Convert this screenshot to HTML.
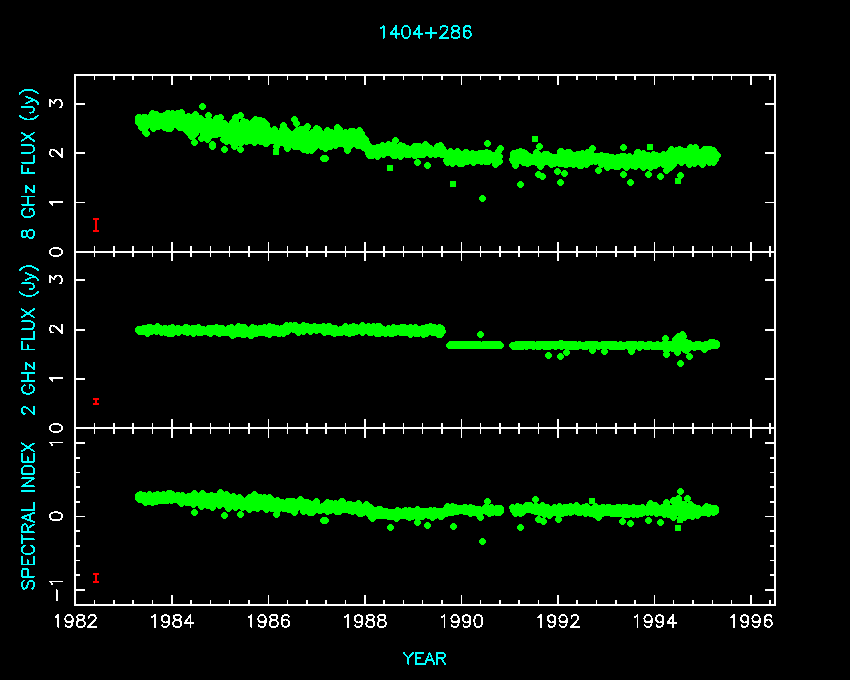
<!DOCTYPE html>
<html><head><meta charset="utf-8"><title>1404+286</title>
<style>
html,body{margin:0;padding:0;background:#000;font-family:"Liberation Sans",sans-serif;}
svg{display:block}
</style></head><body>
<svg width="850" height="680" viewBox="0 0 850 680">
<rect width="850" height="680" fill="#000"/>
<g fill="#0f0" shape-rendering="crispEdges">
<defs><path id="d" d="M-1-3h3v1h1v1h1v3h-1v1h-1v1h-3v-1h-1v-1h-1v-3h1v-1h1z"/></defs>
<use href="#d" x="269" y="133"/><use href="#d" x="321" y="136"/><use href="#d" x="600" y="162"/><use href="#d" x="529" y="156"/><use href="#d" x="364" y="144"/><use href="#d" x="330" y="138"/><use href="#d" x="484" y="157"/><use href="#d" x="246" y="136"/><use href="#d" x="527" y="163"/><use href="#d" x="683" y="160"/><use href="#d" x="281" y="133"/><use href="#d" x="687" y="151"/><use href="#d" x="524" y="156"/><use href="#d" x="193" y="125"/><use href="#d" x="394" y="151"/><use href="#d" x="651" y="159"/><use href="#d" x="542" y="159"/><use href="#d" x="327" y="130"/><use href="#d" x="563" y="157"/><use href="#d" x="265" y="136"/><use href="#d" x="185" y="128"/><use href="#d" x="230" y="137"/><use href="#d" x="335" y="137"/><use href="#d" x="407" y="148"/><use href="#d" x="292" y="137"/><use href="#d" x="610" y="161"/><use href="#d" x="250" y="129"/><use href="#d" x="213" y="131"/><use href="#d" x="191" y="128"/><use href="#d" x="633" y="165"/><use href="#d" x="486" y="154"/><use href="#d" x="678" y="150"/><use href="#d" x="558" y="159"/><use href="#d" x="636" y="155"/><use href="#d" x="676" y="155"/><use href="#d" x="454" y="156"/><use href="#d" x="681" y="152"/><use href="#d" x="424" y="152"/><use href="#d" x="296" y="140"/><use href="#d" x="399" y="151"/><use href="#d" x="523" y="158"/><use href="#d" x="329" y="141"/><use href="#d" x="661" y="158"/><use href="#d" x="286" y="141"/><use href="#d" x="334" y="137"/><use href="#d" x="288" y="138"/><use href="#d" x="343" y="136"/><use href="#d" x="140" y="124"/><use href="#d" x="301" y="139"/><use href="#d" x="177" y="113"/><use href="#d" x="495" y="159"/><use href="#d" x="240" y="115"/><use href="#d" x="314" y="140"/><use href="#d" x="393" y="151"/><use href="#d" x="225" y="140"/><use href="#d" x="264" y="134"/><use href="#d" x="412" y="149"/><use href="#d" x="414" y="155"/><use href="#d" x="285" y="143"/><use href="#d" x="310" y="145"/><use href="#d" x="299" y="136"/><use href="#d" x="289" y="141"/><use href="#d" x="417" y="146"/><use href="#d" x="260" y="134"/><use href="#d" x="425" y="145"/><use href="#d" x="280" y="132"/><use href="#d" x="623" y="156"/><use href="#d" x="242" y="137"/><use href="#d" x="637" y="162"/><use href="#d" x="241" y="126"/><use href="#d" x="572" y="163"/><use href="#d" x="492" y="157"/><use href="#d" x="259" y="120"/><use href="#d" x="578" y="158"/><use href="#d" x="282" y="129"/><use href="#d" x="187" y="122"/><use href="#d" x="496" y="159"/><use href="#d" x="449" y="154"/><use href="#d" x="239" y="135"/><use href="#d" x="281" y="142"/><use href="#d" x="534" y="156"/><use href="#d" x="184" y="123"/><use href="#d" x="645" y="159"/><use href="#d" x="386" y="148"/><use href="#d" x="496" y="162"/><use href="#d" x="319" y="136"/><use href="#d" x="241" y="127"/><use href="#d" x="143" y="121"/><use href="#d" x="259" y="135"/><use href="#d" x="642" y="162"/><use href="#d" x="701" y="152"/><use href="#d" x="394" y="153"/><use href="#d" x="357" y="145"/><use href="#d" x="297" y="146"/><use href="#d" x="697" y="157"/><use href="#d" x="171" y="117"/><use href="#d" x="374" y="148"/><use href="#d" x="235" y="133"/><use href="#d" x="277" y="136"/><use href="#d" x="590" y="157"/><use href="#d" x="256" y="127"/><use href="#d" x="457" y="151"/><use href="#d" x="350" y="137"/><use href="#d" x="431" y="150"/><use href="#d" x="331" y="135"/><use href="#d" x="301" y="131"/><use href="#d" x="301" y="136"/><use href="#d" x="187" y="121"/><use href="#d" x="417" y="148"/><use href="#d" x="649" y="161"/><use href="#d" x="686" y="155"/><use href="#d" x="153" y="120"/><use href="#d" x="669" y="160"/><use href="#d" x="208" y="127"/><use href="#d" x="571" y="159"/><use href="#d" x="657" y="161"/><use href="#d" x="235" y="136"/><use href="#d" x="330" y="141"/><use href="#d" x="357" y="136"/><use href="#d" x="338" y="140"/><use href="#d" x="437" y="153"/><use href="#d" x="143" y="117"/><use href="#d" x="382" y="149"/><use href="#d" x="646" y="159"/><use href="#d" x="188" y="123"/><use href="#d" x="418" y="154"/><use href="#d" x="416" y="153"/><use href="#d" x="591" y="157"/><use href="#d" x="696" y="156"/><use href="#d" x="547" y="154"/><use href="#d" x="296" y="132"/><use href="#d" x="526" y="160"/><use href="#d" x="339" y="129"/><use href="#d" x="583" y="160"/><use href="#d" x="704" y="155"/><use href="#d" x="640" y="159"/><use href="#d" x="164" y="127"/><use href="#d" x="306" y="140"/><use href="#d" x="637" y="161"/><use href="#d" x="486" y="159"/><use href="#d" x="337" y="127"/><use href="#d" x="170" y="128"/><use href="#d" x="580" y="154"/><use href="#d" x="138" y="118"/><use href="#d" x="191" y="129"/><use href="#d" x="713" y="150"/><use href="#d" x="587" y="152"/><use href="#d" x="641" y="163"/><use href="#d" x="414" y="150"/><use href="#d" x="235" y="137"/><use href="#d" x="447" y="157"/><use href="#d" x="384" y="149"/><use href="#d" x="232" y="142"/><use href="#d" x="234" y="130"/><use href="#d" x="287" y="148"/><use href="#d" x="684" y="152"/><use href="#d" x="709" y="151"/><use href="#d" x="545" y="157"/><use href="#d" x="557" y="159"/><use href="#d" x="562" y="154"/><use href="#d" x="437" y="149"/><use href="#d" x="240" y="139"/><use href="#d" x="646" y="160"/><use href="#d" x="648" y="163"/><use href="#d" x="549" y="160"/><use href="#d" x="678" y="153"/><use href="#d" x="705" y="153"/><use href="#d" x="429" y="151"/><use href="#d" x="577" y="160"/><use href="#d" x="495" y="157"/><use href="#d" x="204" y="124"/><use href="#d" x="321" y="146"/><use href="#d" x="177" y="124"/><use href="#d" x="651" y="160"/><use href="#d" x="150" y="119"/><use href="#d" x="449" y="155"/><use href="#d" x="240" y="143"/><use href="#d" x="223" y="128"/><use href="#d" x="234" y="146"/><use href="#d" x="646" y="158"/><use href="#d" x="424" y="147"/><use href="#d" x="335" y="145"/><use href="#d" x="717" y="155"/><use href="#d" x="454" y="160"/><use href="#d" x="313" y="141"/><use href="#d" x="352" y="137"/><use href="#d" x="541" y="162"/><use href="#d" x="207" y="127"/><use href="#d" x="577" y="161"/><use href="#d" x="650" y="159"/><use href="#d" x="413" y="147"/><use href="#d" x="391" y="150"/><use href="#d" x="220" y="128"/><use href="#d" x="580" y="161"/><use href="#d" x="377" y="147"/><use href="#d" x="497" y="160"/><use href="#d" x="163" y="122"/><use href="#d" x="265" y="143"/><use href="#d" x="256" y="136"/><use href="#d" x="706" y="157"/><use href="#d" x="163" y="117"/><use href="#d" x="262" y="132"/><use href="#d" x="156" y="114"/><use href="#d" x="516" y="158"/><use href="#d" x="338" y="136"/><use href="#d" x="159" y="118"/><use href="#d" x="390" y="149"/><use href="#d" x="237" y="134"/><use href="#d" x="385" y="150"/><use href="#d" x="354" y="133"/><use href="#d" x="266" y="140"/><use href="#d" x="625" y="160"/><use href="#d" x="539" y="160"/><use href="#d" x="410" y="151"/><use href="#d" x="369" y="147"/><use href="#d" x="201" y="128"/><use href="#d" x="487" y="156"/><use href="#d" x="430" y="148"/><use href="#d" x="662" y="160"/><use href="#d" x="699" y="159"/><use href="#d" x="607" y="162"/><use href="#d" x="640" y="160"/><use href="#d" x="425" y="149"/><use href="#d" x="354" y="136"/><use href="#d" x="415" y="150"/><use href="#d" x="445" y="152"/><use href="#d" x="611" y="163"/><use href="#d" x="225" y="132"/><use href="#d" x="486" y="153"/><use href="#d" x="663" y="164"/><use href="#d" x="266" y="143"/><use href="#d" x="304" y="132"/><use href="#d" x="626" y="159"/><use href="#d" x="515" y="155"/><use href="#d" x="697" y="159"/><use href="#d" x="688" y="150"/><use href="#d" x="617" y="162"/><use href="#d" x="528" y="159"/><use href="#d" x="248" y="137"/><use href="#d" x="261" y="122"/><use href="#d" x="638" y="157"/><use href="#d" x="331" y="136"/><use href="#d" x="535" y="161"/><use href="#d" x="404" y="152"/><use href="#d" x="144" y="123"/><use href="#d" x="614" y="158"/><use href="#d" x="318" y="138"/><use href="#d" x="333" y="135"/><use href="#d" x="179" y="118"/><use href="#d" x="499" y="156"/><use href="#d" x="589" y="160"/><use href="#d" x="434" y="151"/><use href="#d" x="414" y="146"/><use href="#d" x="585" y="160"/><use href="#d" x="194" y="123"/><use href="#d" x="451" y="153"/><use href="#d" x="571" y="163"/><use href="#d" x="350" y="138"/><use href="#d" x="645" y="160"/><use href="#d" x="402" y="150"/><use href="#d" x="205" y="127"/><use href="#d" x="704" y="149"/><use href="#d" x="402" y="152"/><use href="#d" x="574" y="157"/><use href="#d" x="183" y="120"/><use href="#d" x="606" y="160"/><use href="#d" x="226" y="126"/><use href="#d" x="210" y="121"/><use href="#d" x="298" y="136"/><use href="#d" x="384" y="152"/><use href="#d" x="419" y="149"/><use href="#d" x="158" y="120"/><use href="#d" x="483" y="155"/><use href="#d" x="567" y="162"/><use href="#d" x="705" y="157"/><use href="#d" x="459" y="163"/><use href="#d" x="678" y="156"/><use href="#d" x="689" y="164"/><use href="#d" x="261" y="129"/><use href="#d" x="176" y="121"/><use href="#d" x="236" y="125"/><use href="#d" x="569" y="157"/><use href="#d" x="289" y="136"/><use href="#d" x="203" y="130"/><use href="#d" x="684" y="160"/><use href="#d" x="534" y="158"/><use href="#d" x="693" y="151"/><use href="#d" x="328" y="138"/><use href="#d" x="249" y="129"/><use href="#d" x="217" y="128"/><use href="#d" x="684" y="158"/><use href="#d" x="233" y="139"/><use href="#d" x="602" y="158"/><use href="#d" x="260" y="128"/><use href="#d" x="638" y="152"/><use href="#d" x="170" y="117"/><use href="#d" x="359" y="141"/><use href="#d" x="370" y="148"/><use href="#d" x="703" y="159"/><use href="#d" x="658" y="161"/><use href="#d" x="360" y="140"/><use href="#d" x="384" y="151"/><use href="#d" x="552" y="158"/><use href="#d" x="656" y="162"/><use href="#d" x="536" y="162"/><use href="#d" x="436" y="151"/><use href="#d" x="659" y="159"/><use href="#d" x="329" y="144"/><use href="#d" x="350" y="145"/><use href="#d" x="341" y="135"/><use href="#d" x="421" y="152"/><use href="#d" x="400" y="156"/><use href="#d" x="321" y="138"/><use href="#d" x="278" y="134"/><use href="#d" x="361" y="133"/><use href="#d" x="706" y="158"/><use href="#d" x="377" y="149"/><use href="#d" x="542" y="163"/><use href="#d" x="314" y="147"/><use href="#d" x="616" y="165"/><use href="#d" x="297" y="130"/><use href="#d" x="307" y="126"/><use href="#d" x="212" y="146"/><use href="#d" x="572" y="158"/><use href="#d" x="388" y="148"/><use href="#d" x="210" y="130"/><use href="#d" x="448" y="158"/><use href="#d" x="420" y="150"/><use href="#d" x="430" y="151"/><use href="#d" x="550" y="159"/><use href="#d" x="176" y="114"/><use href="#d" x="423" y="154"/><use href="#d" x="167" y="128"/><use href="#d" x="703" y="156"/><use href="#d" x="520" y="157"/><use href="#d" x="236" y="143"/><use href="#d" x="670" y="167"/><use href="#d" x="239" y="131"/><use href="#d" x="343" y="141"/><use href="#d" x="165" y="119"/><use href="#d" x="353" y="140"/><use href="#d" x="561" y="151"/><use href="#d" x="208" y="115"/><use href="#d" x="588" y="159"/><use href="#d" x="385" y="149"/><use href="#d" x="602" y="161"/><use href="#d" x="238" y="132"/><use href="#d" x="660" y="161"/><use href="#d" x="559" y="159"/><use href="#d" x="165" y="120"/><use href="#d" x="415" y="152"/><use href="#d" x="175" y="117"/><use href="#d" x="556" y="162"/><use href="#d" x="348" y="135"/><use href="#d" x="586" y="157"/><use href="#d" x="649" y="162"/><use href="#d" x="240" y="129"/><use href="#d" x="607" y="163"/><use href="#d" x="361" y="144"/><use href="#d" x="517" y="156"/><use href="#d" x="702" y="164"/><use href="#d" x="533" y="160"/><use href="#d" x="266" y="129"/><use href="#d" x="138" y="122"/><use href="#d" x="202" y="128"/><use href="#d" x="308" y="142"/><use href="#d" x="176" y="118"/><use href="#d" x="686" y="159"/><use href="#d" x="225" y="125"/><use href="#d" x="331" y="133"/><use href="#d" x="697" y="155"/><use href="#d" x="447" y="162"/><use href="#d" x="539" y="161"/><use href="#d" x="304" y="144"/><use href="#d" x="523" y="156"/><use href="#d" x="232" y="136"/><use href="#d" x="338" y="128"/><use href="#d" x="663" y="159"/><use href="#d" x="560" y="159"/><use href="#d" x="405" y="150"/><use href="#d" x="403" y="146"/><use href="#d" x="568" y="154"/><use href="#d" x="368" y="150"/><use href="#d" x="388" y="152"/><use href="#d" x="466" y="156"/><use href="#d" x="462" y="161"/><use href="#d" x="404" y="148"/><use href="#d" x="488" y="159"/><use href="#d" x="224" y="134"/><use href="#d" x="566" y="161"/><use href="#d" x="232" y="123"/><use href="#d" x="606" y="163"/><use href="#d" x="469" y="157"/><use href="#d" x="680" y="152"/><use href="#d" x="379" y="149"/><use href="#d" x="519" y="157"/><use href="#d" x="180" y="122"/><use href="#d" x="313" y="135"/><use href="#d" x="232" y="127"/><use href="#d" x="525" y="157"/><use href="#d" x="208" y="129"/><use href="#d" x="426" y="152"/><use href="#d" x="284" y="143"/><use href="#d" x="235" y="120"/><use href="#d" x="609" y="160"/><use href="#d" x="279" y="138"/><use href="#d" x="184" y="121"/><use href="#d" x="365" y="139"/><use href="#d" x="260" y="136"/><use href="#d" x="551" y="164"/><use href="#d" x="496" y="158"/><use href="#d" x="687" y="153"/><use href="#d" x="631" y="162"/><use href="#d" x="315" y="139"/><use href="#d" x="636" y="160"/><use href="#d" x="284" y="139"/><use href="#d" x="632" y="158"/><use href="#d" x="222" y="132"/><use href="#d" x="676" y="153"/><use href="#d" x="465" y="152"/><use href="#d" x="403" y="153"/><use href="#d" x="371" y="151"/><use href="#d" x="356" y="137"/><use href="#d" x="229" y="140"/><use href="#d" x="344" y="138"/><use href="#d" x="209" y="134"/><use href="#d" x="409" y="150"/><use href="#d" x="477" y="154"/><use href="#d" x="517" y="158"/><use href="#d" x="385" y="152"/><use href="#d" x="561" y="153"/><use href="#d" x="549" y="158"/><use href="#d" x="359" y="138"/><use href="#d" x="386" y="150"/><use href="#d" x="343" y="139"/><use href="#d" x="220" y="117"/><use href="#d" x="610" y="160"/><use href="#d" x="478" y="155"/><use href="#d" x="353" y="131"/><use href="#d" x="684" y="156"/><use href="#d" x="693" y="155"/><use href="#d" x="699" y="152"/><use href="#d" x="196" y="118"/><use href="#d" x="422" y="151"/><use href="#d" x="671" y="149"/><use href="#d" x="311" y="134"/><use href="#d" x="404" y="151"/><use href="#d" x="299" y="146"/><use href="#d" x="469" y="160"/><use href="#d" x="448" y="156"/><use href="#d" x="627" y="164"/><use href="#d" x="276" y="146"/><use href="#d" x="576" y="163"/><use href="#d" x="635" y="161"/><use href="#d" x="149" y="121"/><use href="#d" x="369" y="148"/><use href="#d" x="285" y="138"/><use href="#d" x="420" y="148"/><use href="#d" x="715" y="155"/><use href="#d" x="473" y="162"/><use href="#d" x="177" y="123"/><use href="#d" x="571" y="158"/><use href="#d" x="254" y="142"/><use href="#d" x="406" y="154"/><use href="#d" x="666" y="156"/><use href="#d" x="335" y="133"/><use href="#d" x="523" y="162"/><use href="#d" x="174" y="121"/><use href="#d" x="384" y="148"/><use href="#d" x="479" y="154"/><use href="#d" x="302" y="143"/><use href="#d" x="568" y="156"/><use href="#d" x="323" y="141"/><use href="#d" x="294" y="146"/><use href="#d" x="541" y="161"/><use href="#d" x="548" y="158"/><use href="#d" x="214" y="134"/><use href="#d" x="193" y="124"/><use href="#d" x="619" y="162"/><use href="#d" x="298" y="131"/><use href="#d" x="663" y="154"/><use href="#d" x="469" y="156"/><use href="#d" x="486" y="152"/><use href="#d" x="140" y="119"/><use href="#d" x="466" y="157"/><use href="#d" x="642" y="160"/><use href="#d" x="713" y="162"/><use href="#d" x="358" y="133"/><use href="#d" x="235" y="129"/><use href="#d" x="378" y="148"/><use href="#d" x="400" y="155"/><use href="#d" x="409" y="149"/><use href="#d" x="455" y="156"/><use href="#d" x="173" y="119"/><use href="#d" x="146" y="133"/><use href="#d" x="582" y="158"/><use href="#d" x="366" y="142"/><use href="#d" x="517" y="161"/><use href="#d" x="551" y="157"/><use href="#d" x="306" y="128"/><use href="#d" x="365" y="147"/><use href="#d" x="218" y="122"/><use href="#d" x="480" y="153"/><use href="#d" x="565" y="158"/><use href="#d" x="490" y="154"/><use href="#d" x="286" y="130"/><use href="#d" x="376" y="148"/><use href="#d" x="396" y="154"/><use href="#d" x="145" y="127"/><use href="#d" x="589" y="154"/><use href="#d" x="658" y="159"/><use href="#d" x="306" y="139"/><use href="#d" x="347" y="137"/><use href="#d" x="422" y="150"/><use href="#d" x="368" y="153"/><use href="#d" x="352" y="135"/><use href="#d" x="570" y="156"/><use href="#d" x="516" y="157"/><use href="#d" x="323" y="135"/><use href="#d" x="534" y="157"/><use href="#d" x="393" y="148"/><use href="#d" x="289" y="133"/><use href="#d" x="638" y="163"/><use href="#d" x="141" y="119"/><use href="#d" x="554" y="162"/><use href="#d" x="606" y="158"/><use href="#d" x="260" y="126"/><use href="#d" x="468" y="158"/><use href="#d" x="707" y="154"/><use href="#d" x="312" y="143"/><use href="#d" x="494" y="159"/><use href="#d" x="377" y="156"/><use href="#d" x="393" y="144"/><use href="#d" x="574" y="156"/><use href="#d" x="453" y="156"/><use href="#d" x="567" y="158"/><use href="#d" x="462" y="163"/><use href="#d" x="316" y="128"/><use href="#d" x="484" y="158"/><use href="#d" x="568" y="157"/><use href="#d" x="175" y="120"/><use href="#d" x="233" y="138"/><use href="#d" x="342" y="137"/><use href="#d" x="282" y="141"/><use href="#d" x="466" y="160"/><use href="#d" x="166" y="125"/><use href="#d" x="669" y="153"/><use href="#d" x="564" y="155"/><use href="#d" x="381" y="147"/><use href="#d" x="174" y="119"/><use href="#d" x="566" y="164"/><use href="#d" x="466" y="155"/><use href="#d" x="378" y="149"/><use href="#d" x="319" y="138"/><use href="#d" x="169" y="126"/><use href="#d" x="577" y="158"/><use href="#d" x="293" y="141"/><use href="#d" x="272" y="138"/><use href="#d" x="466" y="152"/><use href="#d" x="306" y="132"/><use href="#d" x="201" y="130"/><use href="#d" x="643" y="154"/><use href="#d" x="238" y="129"/><use href="#d" x="263" y="124"/><use href="#d" x="567" y="159"/><use href="#d" x="404" y="150"/><use href="#d" x="679" y="149"/><use href="#d" x="656" y="158"/><use href="#d" x="463" y="154"/><use href="#d" x="232" y="128"/><use href="#d" x="316" y="145"/><use href="#d" x="522" y="157"/><use href="#d" x="310" y="140"/><use href="#d" x="435" y="154"/><use href="#d" x="463" y="160"/><use href="#d" x="683" y="156"/><use href="#d" x="498" y="159"/><use href="#d" x="304" y="136"/><use href="#d" x="205" y="121"/><use href="#d" x="484" y="154"/><use href="#d" x="457" y="154"/><use href="#d" x="575" y="161"/><use href="#d" x="139" y="120"/><use href="#d" x="494" y="161"/><use href="#d" x="470" y="155"/><use href="#d" x="656" y="155"/><use href="#d" x="583" y="156"/><use href="#d" x="491" y="159"/><use href="#d" x="714" y="156"/><use href="#d" x="333" y="133"/><use href="#d" x="277" y="142"/><use href="#d" x="293" y="136"/><use href="#d" x="207" y="128"/><use href="#d" x="374" y="153"/><use href="#d" x="337" y="138"/><use href="#d" x="207" y="125"/><use href="#d" x="618" y="157"/><use href="#d" x="621" y="164"/><use href="#d" x="283" y="125"/><use href="#d" x="189" y="120"/><use href="#d" x="256" y="120"/><use href="#d" x="476" y="155"/><use href="#d" x="636" y="158"/><use href="#d" x="318" y="137"/><use href="#d" x="439" y="150"/><use href="#d" x="185" y="129"/><use href="#d" x="349" y="145"/><use href="#d" x="661" y="160"/><use href="#d" x="222" y="127"/><use href="#d" x="574" y="158"/><use href="#d" x="398" y="151"/><use href="#d" x="465" y="156"/><use href="#d" x="660" y="156"/><use href="#d" x="390" y="146"/><use href="#d" x="302" y="138"/><use href="#d" x="267" y="128"/><use href="#d" x="495" y="164"/><use href="#d" x="480" y="158"/><use href="#d" x="439" y="152"/><use href="#d" x="315" y="143"/><use href="#d" x="389" y="147"/><use href="#d" x="454" y="153"/><use href="#d" x="153" y="119"/><use href="#d" x="175" y="122"/><use href="#d" x="160" y="122"/><use href="#d" x="624" y="165"/><use href="#d" x="497" y="162"/><use href="#d" x="319" y="144"/><use href="#d" x="470" y="160"/><use href="#d" x="195" y="131"/><use href="#d" x="251" y="129"/><use href="#d" x="329" y="136"/><use href="#d" x="345" y="132"/><use href="#d" x="629" y="163"/><use href="#d" x="454" y="161"/><use href="#d" x="182" y="118"/><use href="#d" x="290" y="141"/><use href="#d" x="431" y="151"/><use href="#d" x="577" y="157"/><use href="#d" x="715" y="157"/><use href="#d" x="324" y="141"/><use href="#d" x="497" y="161"/><use href="#d" x="397" y="151"/><use href="#d" x="231" y="129"/><use href="#d" x="271" y="140"/><use href="#d" x="371" y="150"/><use href="#d" x="210" y="135"/><use href="#d" x="413" y="149"/><use href="#d" x="700" y="157"/><use href="#d" x="646" y="157"/><use href="#d" x="680" y="160"/><use href="#d" x="184" y="120"/><use href="#d" x="517" y="157"/><use href="#d" x="478" y="159"/><use href="#d" x="288" y="134"/><use href="#d" x="562" y="163"/><use href="#d" x="447" y="154"/><use href="#d" x="698" y="155"/><use href="#d" x="212" y="144"/><use href="#d" x="442" y="148"/><use href="#d" x="632" y="165"/><use href="#d" x="234" y="134"/><use href="#d" x="679" y="152"/><use href="#d" x="565" y="159"/><use href="#d" x="516" y="154"/><use href="#d" x="263" y="138"/><use href="#d" x="675" y="155"/><use href="#d" x="185" y="118"/><use href="#d" x="349" y="137"/><use href="#d" x="170" y="120"/><use href="#d" x="408" y="153"/><use href="#d" x="428" y="149"/><use href="#d" x="273" y="131"/><use href="#d" x="565" y="155"/><use href="#d" x="284" y="142"/><use href="#d" x="328" y="140"/><use href="#d" x="257" y="126"/><use href="#d" x="400" y="147"/><use href="#d" x="172" y="120"/><use href="#d" x="186" y="125"/><use href="#d" x="288" y="137"/><use href="#d" x="712" y="156"/><use href="#d" x="178" y="123"/><use href="#d" x="309" y="144"/><use href="#d" x="358" y="136"/><use href="#d" x="619" y="163"/><use href="#d" x="203" y="123"/><use href="#d" x="675" y="152"/><use href="#d" x="556" y="159"/><use href="#d" x="658" y="163"/><use href="#d" x="612" y="165"/><use href="#d" x="478" y="156"/><use href="#d" x="168" y="113"/><use href="#d" x="476" y="156"/><use href="#d" x="236" y="135"/><use href="#d" x="690" y="160"/><use href="#d" x="232" y="129"/><use href="#d" x="251" y="126"/><use href="#d" x="488" y="156"/><use href="#d" x="565" y="156"/><use href="#d" x="214" y="124"/><use href="#d" x="366" y="145"/><use href="#d" x="398" y="148"/><use href="#d" x="403" y="150"/><use href="#d" x="399" y="149"/><use href="#d" x="148" y="124"/><use href="#d" x="679" y="154"/><use href="#d" x="472" y="157"/><use href="#d" x="547" y="161"/><use href="#d" x="692" y="151"/><use href="#d" x="458" y="156"/><use href="#d" x="342" y="136"/><use href="#d" x="574" y="162"/><use href="#d" x="243" y="140"/><use href="#d" x="482" y="157"/><use href="#d" x="566" y="157"/><use href="#d" x="467" y="161"/><use href="#d" x="625" y="158"/><use href="#d" x="221" y="133"/><use href="#d" x="610" y="162"/><use href="#d" x="684" y="155"/><use href="#d" x="630" y="159"/><use href="#d" x="358" y="138"/><use href="#d" x="226" y="141"/><use href="#d" x="483" y="158"/><use href="#d" x="288" y="135"/><use href="#d" x="544" y="160"/><use href="#d" x="320" y="143"/><use href="#d" x="554" y="163"/><use href="#d" x="413" y="151"/><use href="#d" x="665" y="163"/><use href="#d" x="168" y="121"/><use href="#d" x="695" y="154"/><use href="#d" x="233" y="132"/><use href="#d" x="307" y="143"/><use href="#d" x="581" y="156"/><use href="#d" x="138" y="117"/><use href="#d" x="423" y="147"/><use href="#d" x="525" y="153"/><use href="#d" x="332" y="136"/><use href="#d" x="313" y="138"/><use href="#d" x="691" y="156"/><use href="#d" x="656" y="160"/><use href="#d" x="340" y="139"/><use href="#d" x="195" y="125"/><use href="#d" x="176" y="116"/><use href="#d" x="296" y="123"/><use href="#d" x="563" y="161"/><use href="#d" x="287" y="142"/><use href="#d" x="287" y="141"/><use href="#d" x="443" y="153"/><use href="#d" x="694" y="156"/><use href="#d" x="468" y="154"/><use href="#d" x="331" y="141"/><use href="#d" x="224" y="123"/><use href="#d" x="227" y="129"/><use href="#d" x="653" y="164"/><use href="#d" x="223" y="126"/><use href="#d" x="169" y="124"/><use href="#d" x="536" y="158"/><use href="#d" x="252" y="122"/><use href="#d" x="624" y="160"/><use href="#d" x="152" y="113"/><use href="#d" x="338" y="143"/><use href="#d" x="213" y="132"/><use href="#d" x="294" y="140"/><use href="#d" x="340" y="138"/><use href="#d" x="700" y="158"/><use href="#d" x="538" y="154"/><use href="#d" x="281" y="137"/><use href="#d" x="365" y="148"/><use href="#d" x="494" y="155"/><use href="#d" x="479" y="157"/><use href="#d" x="369" y="155"/><use href="#d" x="243" y="121"/><use href="#d" x="620" y="157"/><use href="#d" x="461" y="157"/><use href="#d" x="482" y="160"/><use href="#d" x="560" y="154"/><use href="#d" x="260" y="132"/><use href="#d" x="689" y="155"/><use href="#d" x="596" y="156"/><use href="#d" x="599" y="158"/><use href="#d" x="571" y="162"/><use href="#d" x="256" y="132"/><use href="#d" x="515" y="154"/><use href="#d" x="279" y="133"/><use href="#d" x="444" y="154"/><use href="#d" x="654" y="155"/><use href="#d" x="176" y="117"/><use href="#d" x="569" y="152"/><use href="#d" x="702" y="163"/><use href="#d" x="590" y="152"/><use href="#d" x="523" y="157"/><use href="#d" x="181" y="119"/><use href="#d" x="303" y="134"/><use href="#d" x="374" y="150"/><use href="#d" x="613" y="158"/><use href="#d" x="358" y="141"/><use href="#d" x="251" y="124"/><use href="#d" x="167" y="113"/><use href="#d" x="538" y="161"/><use href="#d" x="391" y="149"/><use href="#d" x="472" y="153"/><use href="#d" x="369" y="146"/><use href="#d" x="630" y="157"/><use href="#d" x="416" y="148"/><use href="#d" x="450" y="151"/><use href="#d" x="311" y="150"/><use href="#d" x="562" y="159"/><use href="#d" x="295" y="138"/><use href="#d" x="579" y="158"/><use href="#d" x="493" y="157"/><use href="#d" x="692" y="157"/><use href="#d" x="412" y="152"/><use href="#d" x="559" y="156"/><use href="#d" x="175" y="119"/><use href="#d" x="552" y="157"/><use href="#d" x="451" y="157"/><use href="#d" x="271" y="139"/><use href="#d" x="602" y="163"/><use href="#d" x="252" y="128"/><use href="#d" x="430" y="149"/><use href="#d" x="189" y="127"/><use href="#d" x="204" y="125"/><use href="#d" x="666" y="161"/><use href="#d" x="267" y="135"/><use href="#d" x="681" y="150"/><use href="#d" x="396" y="152"/><use href="#d" x="144" y="120"/><use href="#d" x="359" y="140"/><use href="#d" x="482" y="153"/><use href="#d" x="451" y="156"/><use href="#d" x="192" y="136"/><use href="#d" x="204" y="121"/><use href="#d" x="358" y="142"/><use href="#d" x="390" y="147"/><use href="#d" x="611" y="157"/><use href="#d" x="151" y="125"/><use href="#d" x="544" y="159"/><use href="#d" x="396" y="151"/><use href="#d" x="161" y="121"/><use href="#d" x="676" y="156"/><use href="#d" x="164" y="126"/><use href="#d" x="347" y="143"/><use href="#d" x="691" y="152"/><use href="#d" x="260" y="137"/><use href="#d" x="440" y="145"/><use href="#d" x="216" y="134"/><use href="#d" x="485" y="156"/><use href="#d" x="173" y="120"/><use href="#d" x="338" y="135"/><use href="#d" x="533" y="159"/><use href="#d" x="552" y="162"/><use href="#d" x="519" y="158"/><use href="#d" x="219" y="131"/><use href="#d" x="149" y="119"/><use href="#d" x="513" y="157"/><use href="#d" x="357" y="135"/><use href="#d" x="457" y="159"/><use href="#d" x="211" y="123"/><use href="#d" x="219" y="128"/><use href="#d" x="233" y="134"/><use href="#d" x="550" y="160"/><use href="#d" x="257" y="133"/><use href="#d" x="260" y="130"/><use href="#d" x="611" y="161"/><use href="#d" x="354" y="132"/><use href="#d" x="607" y="156"/><use href="#d" x="428" y="147"/><use href="#d" x="472" y="158"/><use href="#d" x="345" y="145"/><use href="#d" x="410" y="150"/><use href="#d" x="371" y="149"/><use href="#d" x="655" y="165"/><use href="#d" x="497" y="159"/><use href="#d" x="474" y="157"/><use href="#d" x="147" y="120"/><use href="#d" x="271" y="137"/><use href="#d" x="378" y="153"/><use href="#d" x="703" y="157"/><use href="#d" x="567" y="156"/><use href="#d" x="666" y="163"/><use href="#d" x="460" y="157"/><use href="#d" x="641" y="165"/><use href="#d" x="407" y="149"/><use href="#d" x="523" y="152"/><use href="#d" x="416" y="151"/><use href="#d" x="406" y="152"/><use href="#d" x="537" y="160"/><use href="#d" x="165" y="117"/><use href="#d" x="475" y="159"/><use href="#d" x="314" y="136"/><use href="#d" x="581" y="158"/><use href="#d" x="307" y="135"/><use href="#d" x="486" y="158"/><use href="#d" x="426" y="149"/><use href="#d" x="715" y="153"/><use href="#d" x="643" y="153"/><use href="#d" x="188" y="122"/><use href="#d" x="667" y="163"/><use href="#d" x="582" y="153"/><use href="#d" x="202" y="129"/><use href="#d" x="671" y="153"/><use href="#d" x="311" y="137"/><use href="#d" x="459" y="159"/><use href="#d" x="226" y="132"/><use href="#d" x="351" y="140"/><use href="#d" x="423" y="153"/><use href="#d" x="247" y="135"/><use href="#d" x="707" y="151"/><use href="#d" x="148" y="118"/><use href="#d" x="311" y="145"/><use href="#d" x="282" y="142"/><use href="#d" x="172" y="113"/><use href="#d" x="276" y="132"/><use href="#d" x="330" y="146"/><use href="#d" x="200" y="118"/><use href="#d" x="639" y="156"/><use href="#d" x="593" y="156"/><use href="#d" x="146" y="124"/><use href="#d" x="156" y="118"/><use href="#d" x="294" y="139"/><use href="#d" x="419" y="146"/><use href="#d" x="685" y="151"/><use href="#d" x="207" y="139"/><use href="#d" x="346" y="140"/><use href="#d" x="579" y="165"/><use href="#d" x="479" y="160"/><use href="#d" x="350" y="144"/><use href="#d" x="433" y="151"/><use href="#d" x="158" y="126"/><use href="#d" x="340" y="135"/><use href="#d" x="540" y="166"/><use href="#d" x="147" y="124"/><use href="#d" x="420" y="152"/><use href="#d" x="247" y="127"/><use href="#d" x="312" y="138"/><use href="#d" x="262" y="130"/><use href="#d" x="203" y="122"/><use href="#d" x="302" y="133"/><use href="#d" x="581" y="160"/><use href="#d" x="476" y="160"/><use href="#d" x="586" y="164"/><use href="#d" x="623" y="163"/><use href="#d" x="359" y="145"/><use href="#d" x="573" y="163"/><use href="#d" x="641" y="160"/><use href="#d" x="275" y="134"/><use href="#d" x="294" y="141"/><use href="#d" x="517" y="155"/><use href="#d" x="144" y="124"/><use href="#d" x="293" y="142"/><use href="#d" x="325" y="143"/><use href="#d" x="668" y="159"/><use href="#d" x="176" y="120"/><use href="#d" x="409" y="154"/><use href="#d" x="607" y="167"/><use href="#d" x="425" y="144"/><use href="#d" x="486" y="160"/><use href="#d" x="552" y="159"/><use href="#d" x="146" y="123"/><use href="#d" x="653" y="157"/><use href="#d" x="279" y="135"/><use href="#d" x="386" y="147"/><use href="#d" x="627" y="161"/><use href="#d" x="340" y="134"/><use href="#d" x="489" y="153"/><use href="#d" x="341" y="143"/><use href="#d" x="299" y="141"/><use href="#d" x="440" y="148"/><use href="#d" x="241" y="134"/><use href="#d" x="367" y="145"/><use href="#d" x="261" y="128"/><use href="#d" x="209" y="130"/><use href="#d" x="700" y="160"/><use href="#d" x="615" y="166"/><use href="#d" x="693" y="158"/><use href="#d" x="379" y="153"/><use href="#d" x="288" y="142"/><use href="#d" x="659" y="161"/><use href="#d" x="386" y="146"/><use href="#d" x="497" y="158"/><use href="#d" x="260" y="141"/><use href="#d" x="419" y="147"/><use href="#d" x="485" y="161"/><use href="#d" x="220" y="133"/><use href="#d" x="407" y="150"/><use href="#d" x="298" y="142"/><use href="#d" x="363" y="143"/><use href="#d" x="358" y="134"/><use href="#d" x="201" y="138"/><use href="#d" x="662" y="157"/><use href="#d" x="488" y="157"/><use href="#d" x="286" y="139"/><use href="#d" x="459" y="154"/><use href="#d" x="350" y="140"/><use href="#d" x="260" y="120"/><use href="#d" x="300" y="135"/><use href="#d" x="472" y="155"/><use href="#d" x="311" y="136"/><use href="#d" x="636" y="159"/><use href="#d" x="566" y="159"/><use href="#d" x="650" y="157"/><use href="#d" x="649" y="159"/><use href="#d" x="574" y="155"/><use href="#d" x="264" y="138"/><use href="#d" x="169" y="117"/><use href="#d" x="360" y="136"/><use href="#d" x="205" y="132"/><use href="#d" x="310" y="141"/><use href="#d" x="335" y="136"/><use href="#d" x="703" y="152"/><use href="#d" x="219" y="133"/><use href="#d" x="498" y="151"/><use href="#d" x="155" y="121"/><use href="#d" x="627" y="157"/><use href="#d" x="363" y="139"/><use href="#d" x="422" y="153"/><use href="#d" x="415" y="146"/><use href="#d" x="297" y="137"/><use href="#d" x="599" y="157"/><use href="#d" x="254" y="130"/><use href="#d" x="697" y="161"/><use href="#d" x="513" y="155"/><use href="#d" x="152" y="123"/><use href="#d" x="693" y="159"/><use href="#d" x="638" y="162"/><use href="#d" x="255" y="119"/><use href="#d" x="706" y="156"/><use href="#d" x="381" y="148"/><use href="#d" x="436" y="148"/><use href="#d" x="373" y="150"/><use href="#d" x="352" y="142"/><use href="#d" x="568" y="163"/><use href="#d" x="584" y="160"/><use href="#d" x="612" y="157"/><use href="#d" x="584" y="162"/><use href="#d" x="223" y="124"/><use href="#d" x="168" y="118"/><use href="#d" x="312" y="144"/><use href="#d" x="329" y="135"/><use href="#d" x="362" y="141"/><use href="#d" x="467" y="156"/><use href="#d" x="296" y="131"/><use href="#d" x="356" y="135"/><use href="#d" x="263" y="141"/><use href="#d" x="369" y="154"/><use href="#d" x="397" y="154"/><use href="#d" x="456" y="154"/><use href="#d" x="246" y="141"/><use href="#d" x="682" y="157"/><use href="#d" x="214" y="132"/><use href="#d" x="601" y="158"/><use href="#d" x="279" y="137"/><use href="#d" x="328" y="142"/><use href="#d" x="405" y="152"/><use href="#d" x="675" y="156"/><use href="#d" x="145" y="120"/><use href="#d" x="181" y="127"/><use href="#d" x="430" y="152"/><use href="#d" x="576" y="160"/><use href="#d" x="220" y="121"/><use href="#d" x="266" y="124"/><use href="#d" x="625" y="162"/><use href="#d" x="573" y="161"/><use href="#d" x="468" y="160"/><use href="#d" x="251" y="127"/><use href="#d" x="437" y="146"/><use href="#d" x="658" y="156"/><use href="#d" x="388" y="144"/><use href="#d" x="179" y="121"/><use href="#d" x="683" y="157"/><use href="#d" x="590" y="161"/><use href="#d" x="181" y="112"/><use href="#d" x="380" y="147"/><use href="#d" x="226" y="135"/><use href="#d" x="650" y="160"/><use href="#d" x="517" y="152"/><use href="#d" x="711" y="153"/><use href="#d" x="182" y="122"/><use href="#d" x="272" y="135"/><use href="#d" x="480" y="157"/><use href="#d" x="671" y="158"/><use href="#d" x="354" y="143"/><use href="#d" x="139" y="117"/><use href="#d" x="218" y="126"/><use href="#d" x="229" y="130"/><use href="#d" x="262" y="134"/><use href="#d" x="255" y="135"/><use href="#d" x="382" y="145"/><use href="#d" x="464" y="160"/><use href="#d" x="154" y="122"/><use href="#d" x="337" y="141"/><use href="#d" x="381" y="151"/><use href="#d" x="194" y="115"/><use href="#d" x="285" y="137"/><use href="#d" x="710" y="153"/><use href="#d" x="516" y="156"/><use href="#d" x="177" y="122"/><use href="#d" x="663" y="156"/><use href="#d" x="603" y="157"/><use href="#d" x="556" y="158"/><use href="#d" x="305" y="140"/><use href="#d" x="424" y="148"/><use href="#d" x="166" y="122"/><use href="#d" x="161" y="117"/><use href="#d" x="333" y="143"/><use href="#d" x="669" y="152"/><use href="#d" x="581" y="162"/><use href="#d" x="692" y="152"/><use href="#d" x="488" y="158"/><use href="#d" x="656" y="157"/><use href="#d" x="273" y="140"/><use href="#d" x="266" y="133"/><use href="#d" x="455" y="155"/><use href="#d" x="453" y="155"/><use href="#d" x="196" y="129"/><use href="#d" x="300" y="142"/><use href="#d" x="287" y="134"/><use href="#d" x="421" y="147"/><use href="#d" x="387" y="150"/><use href="#d" x="652" y="165"/><use href="#d" x="376" y="149"/><use href="#d" x="208" y="126"/><use href="#d" x="428" y="152"/><use href="#d" x="689" y="150"/><use href="#d" x="655" y="161"/><use href="#d" x="145" y="117"/><use href="#d" x="707" y="152"/><use href="#d" x="461" y="158"/><use href="#d" x="611" y="160"/><use href="#d" x="272" y="134"/><use href="#d" x="653" y="160"/><use href="#d" x="421" y="154"/><use href="#d" x="359" y="137"/><use href="#d" x="265" y="130"/><use href="#d" x="281" y="135"/><use href="#d" x="488" y="161"/><use href="#d" x="673" y="154"/><use href="#d" x="448" y="159"/><use href="#d" x="231" y="141"/><use href="#d" x="141" y="127"/><use href="#d" x="633" y="159"/><use href="#d" x="635" y="160"/><use href="#d" x="643" y="160"/><use href="#d" x="239" y="128"/><use href="#d" x="153" y="128"/><use href="#d" x="400" y="145"/><use href="#d" x="434" y="150"/><use href="#d" x="553" y="162"/><use href="#d" x="638" y="156"/><use href="#d" x="423" y="149"/><use href="#d" x="587" y="158"/><use href="#d" x="141" y="120"/><use href="#d" x="260" y="131"/><use href="#d" x="280" y="137"/><use href="#d" x="363" y="147"/><use href="#d" x="637" y="152"/><use href="#d" x="238" y="127"/><use href="#d" x="621" y="157"/><use href="#d" x="230" y="133"/><use href="#d" x="228" y="129"/><use href="#d" x="347" y="141"/><use href="#d" x="414" y="151"/><use href="#d" x="635" y="166"/><use href="#d" x="305" y="136"/><use href="#d" x="226" y="137"/><use href="#d" x="583" y="159"/><use href="#d" x="394" y="146"/><use href="#d" x="269" y="137"/><use href="#d" x="399" y="152"/><use href="#d" x="644" y="157"/><use href="#d" x="665" y="158"/><use href="#d" x="199" y="121"/><use href="#d" x="179" y="127"/><use href="#d" x="303" y="129"/><use href="#d" x="138" y="120"/><use href="#d" x="441" y="152"/><use href="#d" x="692" y="161"/><use href="#d" x="318" y="134"/><use href="#d" x="149" y="123"/><use href="#d" x="513" y="153"/><use href="#d" x="565" y="161"/><use href="#d" x="639" y="159"/><use href="#d" x="636" y="157"/><use href="#d" x="563" y="156"/><use href="#d" x="457" y="158"/><use href="#d" x="359" y="130"/><use href="#d" x="328" y="145"/><use href="#d" x="595" y="156"/><use href="#d" x="485" y="160"/><use href="#d" x="669" y="159"/><use href="#d" x="581" y="165"/><use href="#d" x="274" y="129"/><use href="#d" x="206" y="133"/><use href="#d" x="182" y="117"/><use href="#d" x="348" y="143"/><use href="#d" x="673" y="156"/><use href="#d" x="326" y="135"/><use href="#d" x="155" y="119"/><use href="#d" x="628" y="157"/><use href="#d" x="399" y="150"/><use href="#d" x="446" y="156"/><use href="#d" x="195" y="133"/><use href="#d" x="305" y="134"/><use href="#d" x="279" y="141"/><use href="#d" x="153" y="118"/><use href="#d" x="418" y="148"/><use href="#d" x="164" y="115"/><use href="#d" x="188" y="132"/><use href="#d" x="483" y="156"/><use href="#d" x="637" y="164"/><use href="#d" x="668" y="156"/><use href="#d" x="241" y="128"/><use href="#d" x="674" y="155"/><use href="#d" x="175" y="115"/><use href="#d" x="595" y="161"/><use href="#d" x="231" y="124"/><use href="#d" x="162" y="123"/><use href="#d" x="448" y="153"/><use href="#d" x="643" y="167"/><use href="#d" x="331" y="140"/><use href="#d" x="270" y="139"/><use href="#d" x="319" y="131"/><use href="#d" x="269" y="135"/><use href="#d" x="438" y="149"/><use href="#d" x="199" y="120"/><use href="#d" x="241" y="124"/><use href="#d" x="265" y="133"/><use href="#d" x="527" y="155"/><use href="#d" x="397" y="149"/><use href="#d" x="202" y="122"/><use href="#d" x="348" y="136"/><use href="#d" x="264" y="131"/><use href="#d" x="584" y="154"/><use href="#d" x="657" y="156"/><use href="#d" x="536" y="152"/><use href="#d" x="425" y="150"/><use href="#d" x="701" y="158"/><use href="#d" x="250" y="127"/><use href="#d" x="184" y="127"/><use href="#d" x="261" y="127"/><use href="#d" x="569" y="162"/><use href="#d" x="193" y="127"/><use href="#d" x="683" y="152"/><use href="#d" x="426" y="151"/><use href="#d" x="605" y="159"/><use href="#d" x="542" y="162"/><use href="#d" x="190" y="129"/><use href="#d" x="616" y="160"/><use href="#d" x="334" y="138"/><use href="#d" x="499" y="161"/><use href="#d" x="338" y="141"/><use href="#d" x="375" y="149"/><use href="#d" x="562" y="155"/><use href="#d" x="516" y="160"/><use href="#d" x="421" y="148"/><use href="#d" x="249" y="140"/><use href="#d" x="653" y="154"/><use href="#d" x="367" y="147"/><use href="#d" x="150" y="116"/><use href="#d" x="447" y="156"/><use href="#d" x="295" y="132"/><use href="#d" x="447" y="153"/><use href="#d" x="543" y="157"/><use href="#d" x="680" y="156"/><use href="#d" x="158" y="118"/><use href="#d" x="474" y="154"/><use href="#d" x="696" y="159"/><use href="#d" x="338" y="132"/><use href="#d" x="667" y="155"/><use href="#d" x="332" y="137"/><use href="#d" x="565" y="164"/><use href="#d" x="526" y="156"/><use href="#d" x="221" y="125"/><use href="#d" x="244" y="126"/><use href="#d" x="618" y="159"/><use href="#d" x="184" y="117"/><use href="#d" x="639" y="162"/><use href="#d" x="601" y="155"/><use href="#d" x="636" y="162"/><use href="#d" x="193" y="120"/><use href="#d" x="225" y="131"/><use href="#d" x="188" y="121"/><use href="#d" x="513" y="158"/><use href="#d" x="695" y="155"/><use href="#d" x="559" y="163"/><use href="#d" x="173" y="124"/><use href="#d" x="657" y="162"/><use href="#d" x="336" y="131"/><use href="#d" x="479" y="158"/><use href="#d" x="642" y="159"/><use href="#d" x="251" y="130"/><use href="#d" x="269" y="139"/><use href="#d" x="216" y="118"/><use href="#d" x="284" y="133"/><use href="#d" x="437" y="147"/><use href="#d" x="203" y="134"/><use href="#d" x="647" y="155"/><use href="#d" x="607" y="159"/><use href="#d" x="581" y="163"/><use href="#d" x="692" y="155"/><use href="#d" x="463" y="158"/><use href="#d" x="539" y="159"/><use href="#d" x="301" y="141"/><use href="#d" x="669" y="166"/><use href="#d" x="629" y="156"/><use href="#d" x="249" y="130"/><use href="#d" x="474" y="161"/><use href="#d" x="347" y="150"/><use href="#d" x="415" y="154"/><use href="#d" x="645" y="161"/><use href="#d" x="314" y="131"/><use href="#d" x="470" y="157"/><use href="#d" x="383" y="147"/><use href="#d" x="603" y="159"/><use href="#d" x="650" y="167"/><use href="#d" x="411" y="150"/><use href="#d" x="156" y="121"/><use href="#d" x="575" y="162"/><use href="#d" x="231" y="130"/><use href="#d" x="490" y="157"/><use href="#d" x="638" y="158"/><use href="#d" x="383" y="154"/><use href="#d" x="202" y="123"/><use href="#d" x="385" y="151"/><use href="#d" x="693" y="152"/><use href="#d" x="223" y="135"/><use href="#d" x="600" y="160"/><use href="#d" x="276" y="136"/><use href="#d" x="568" y="152"/><use href="#d" x="329" y="137"/><use href="#d" x="289" y="139"/><use href="#d" x="318" y="143"/><use href="#d" x="331" y="132"/><use href="#d" x="692" y="159"/><use href="#d" x="587" y="160"/><use href="#d" x="467" y="157"/><use href="#d" x="533" y="161"/><use href="#d" x="696" y="155"/><use href="#d" x="212" y="127"/><use href="#d" x="421" y="149"/><use href="#d" x="325" y="148"/><use href="#d" x="676" y="150"/><use href="#d" x="435" y="151"/><use href="#d" x="334" y="135"/><use href="#d" x="198" y="127"/><use href="#d" x="648" y="155"/><use href="#d" x="211" y="134"/><use href="#d" x="442" y="154"/><use href="#d" x="614" y="160"/><use href="#d" x="525" y="155"/><use href="#d" x="620" y="161"/><use href="#d" x="477" y="159"/><use href="#d" x="474" y="160"/><use href="#d" x="593" y="160"/><use href="#d" x="324" y="135"/><use href="#d" x="240" y="142"/><use href="#d" x="205" y="129"/><use href="#d" x="191" y="136"/><use href="#d" x="293" y="134"/><use href="#d" x="226" y="136"/><use href="#d" x="151" y="119"/><use href="#d" x="577" y="154"/><use href="#d" x="690" y="147"/><use href="#d" x="468" y="155"/><use href="#d" x="668" y="160"/><use href="#d" x="631" y="160"/><use href="#d" x="236" y="124"/><use href="#d" x="487" y="158"/><use href="#d" x="590" y="160"/><use href="#d" x="306" y="135"/><use href="#d" x="521" y="159"/><use href="#d" x="562" y="158"/><use href="#d" x="713" y="155"/><use href="#d" x="393" y="155"/><use href="#d" x="357" y="142"/><use href="#d" x="228" y="132"/><use href="#d" x="544" y="154"/><use href="#d" x="228" y="135"/><use href="#d" x="589" y="161"/><use href="#d" x="377" y="152"/><use href="#d" x="693" y="153"/><use href="#d" x="165" y="115"/><use href="#d" x="618" y="166"/><use href="#d" x="481" y="161"/><use href="#d" x="598" y="156"/><use href="#d" x="438" y="150"/><use href="#d" x="458" y="154"/><use href="#d" x="584" y="156"/><use href="#d" x="217" y="124"/><use href="#d" x="592" y="156"/><use href="#d" x="326" y="141"/><use href="#d" x="257" y="130"/><use href="#d" x="464" y="159"/><use href="#d" x="608" y="161"/><use href="#d" x="590" y="154"/><use href="#d" x="695" y="160"/><use href="#d" x="191" y="119"/><use href="#d" x="555" y="157"/><use href="#d" x="325" y="133"/><use href="#d" x="653" y="161"/><use href="#d" x="160" y="116"/><use href="#d" x="350" y="141"/><use href="#d" x="372" y="155"/><use href="#d" x="548" y="160"/><use href="#d" x="235" y="117"/><use href="#d" x="575" y="163"/><use href="#d" x="188" y="124"/><use href="#d" x="452" y="158"/><use href="#d" x="640" y="161"/><use href="#d" x="484" y="160"/><use href="#d" x="517" y="160"/><use href="#d" x="316" y="134"/><use href="#d" x="378" y="150"/><use href="#d" x="472" y="159"/><use href="#d" x="350" y="131"/><use href="#d" x="319" y="140"/><use href="#d" x="707" y="149"/><use href="#d" x="139" y="122"/><use href="#d" x="298" y="146"/><use href="#d" x="227" y="138"/><use href="#d" x="380" y="149"/><use href="#d" x="647" y="162"/><use href="#d" x="680" y="161"/><use href="#d" x="191" y="135"/><use href="#d" x="708" y="161"/><use href="#d" x="622" y="164"/><use href="#d" x="651" y="157"/><use href="#d" x="197" y="130"/><use href="#d" x="557" y="158"/><use href="#d" x="195" y="114"/><use href="#d" x="712" y="154"/><use href="#d" x="415" y="151"/><use href="#d" x="401" y="152"/><use href="#d" x="224" y="127"/><use href="#d" x="392" y="150"/><use href="#d" x="328" y="133"/><use href="#d" x="450" y="156"/><use href="#d" x="471" y="155"/><use href="#d" x="561" y="155"/><use href="#d" x="495" y="160"/><use href="#d" x="406" y="151"/><use href="#d" x="462" y="156"/><use href="#d" x="529" y="162"/><use href="#d" x="287" y="137"/><use href="#d" x="529" y="158"/><use href="#d" x="515" y="165"/><use href="#d" x="292" y="141"/><use href="#d" x="525" y="156"/><use href="#d" x="329" y="143"/><use href="#d" x="359" y="132"/><use href="#d" x="211" y="133"/><use href="#d" x="709" y="162"/><use href="#d" x="673" y="164"/><use href="#d" x="177" y="121"/><use href="#d" x="335" y="134"/><use href="#d" x="706" y="160"/><use href="#d" x="512" y="159"/><use href="#d" x="154" y="124"/><use href="#d" x="464" y="154"/><use href="#d" x="273" y="132"/><use href="#d" x="363" y="140"/><use href="#d" x="524" y="160"/><use href="#d" x="364" y="140"/><use href="#d" x="617" y="157"/><use href="#d" x="281" y="138"/><use href="#d" x="649" y="158"/><use href="#d" x="701" y="160"/><use href="#d" x="205" y="133"/><use href="#d" x="232" y="122"/><use href="#d" x="181" y="125"/><use href="#d" x="223" y="139"/><use href="#d" x="652" y="163"/><use href="#d" x="580" y="159"/><use href="#d" x="327" y="135"/><use href="#d" x="370" y="150"/><use href="#d" x="339" y="135"/><use href="#d" x="440" y="150"/><use href="#d" x="185" y="119"/><use href="#d" x="441" y="151"/><use href="#d" x="394" y="150"/><use href="#d" x="470" y="156"/><use href="#d" x="671" y="156"/><use href="#d" x="681" y="162"/><use href="#d" x="375" y="153"/><use href="#d" x="192" y="130"/><use href="#d" x="701" y="153"/><use href="#d" x="666" y="159"/><use href="#d" x="206" y="132"/><use href="#d" x="307" y="150"/><use href="#d" x="290" y="138"/><use href="#d" x="441" y="154"/><use href="#d" x="591" y="161"/><use href="#d" x="446" y="160"/><use href="#d" x="695" y="147"/><use href="#d" x="454" y="154"/><use href="#d" x="624" y="156"/><use href="#d" x="688" y="156"/><use href="#d" x="252" y="135"/><use href="#d" x="676" y="160"/><use href="#d" x="483" y="157"/><use href="#d" x="448" y="160"/><use href="#d" x="407" y="152"/><use href="#d" x="560" y="151"/><use href="#d" x="658" y="160"/><use href="#d" x="715" y="154"/><use href="#d" x="380" y="153"/><use href="#d" x="550" y="156"/><use href="#d" x="188" y="116"/><use href="#d" x="713" y="156"/><use href="#d" x="431" y="152"/><use href="#d" x="541" y="159"/><use href="#d" x="385" y="148"/><use href="#d" x="567" y="155"/><use href="#d" x="397" y="153"/><use href="#d" x="167" y="119"/><use href="#d" x="671" y="163"/><use href="#d" x="364" y="138"/><use href="#d" x="521" y="157"/><use href="#d" x="514" y="161"/><use href="#d" x="567" y="152"/><use href="#d" x="210" y="127"/><use href="#d" x="297" y="139"/><use href="#d" x="496" y="156"/><use href="#d" x="623" y="161"/><use href="#d" x="545" y="158"/><use href="#d" x="241" y="139"/><use href="#d" x="277" y="143"/><use href="#d" x="520" y="151"/><use href="#d" x="621" y="156"/><use href="#d" x="462" y="155"/><use href="#d" x="392" y="149"/><use href="#d" x="233" y="131"/><use href="#d" x="196" y="123"/><use href="#d" x="316" y="142"/><use href="#d" x="550" y="161"/><use href="#d" x="236" y="132"/><use href="#d" x="387" y="148"/><use href="#d" x="696" y="157"/><use href="#d" x="611" y="158"/><use href="#d" x="479" y="159"/><use href="#d" x="586" y="155"/><use href="#d" x="430" y="154"/><use href="#d" x="582" y="161"/><use href="#d" x="326" y="137"/><use href="#d" x="695" y="159"/><use href="#d" x="181" y="116"/><use href="#d" x="359" y="136"/><use href="#d" x="487" y="154"/><use href="#d" x="369" y="149"/><use href="#d" x="409" y="152"/><use href="#d" x="283" y="135"/><use href="#d" x="694" y="163"/><use href="#d" x="377" y="154"/><use href="#d" x="268" y="140"/><use href="#d" x="362" y="140"/><use href="#d" x="245" y="132"/><use href="#d" x="479" y="153"/><use href="#d" x="626" y="167"/><use href="#d" x="395" y="155"/><use href="#d" x="253" y="131"/><use href="#d" x="337" y="137"/><use href="#d" x="694" y="157"/><use href="#d" x="484" y="155"/><use href="#d" x="620" y="162"/><use href="#d" x="647" y="159"/><use href="#d" x="462" y="154"/><use href="#d" x="526" y="155"/><use href="#d" x="373" y="149"/><use href="#d" x="339" y="134"/><use href="#d" x="710" y="149"/><use href="#d" x="601" y="164"/><use href="#d" x="657" y="157"/><use href="#d" x="289" y="145"/><use href="#d" x="325" y="139"/><use href="#d" x="696" y="158"/><use href="#d" x="361" y="134"/><use href="#d" x="462" y="157"/><use href="#d" x="160" y="118"/><use href="#d" x="655" y="159"/><use href="#d" x="590" y="159"/><use href="#d" x="594" y="157"/><use href="#d" x="221" y="122"/><use href="#d" x="377" y="148"/><use href="#d" x="647" y="161"/><use href="#d" x="179" y="122"/><use href="#d" x="176" y="124"/><use href="#d" x="573" y="164"/><use href="#d" x="592" y="159"/><use href="#d" x="434" y="152"/><use href="#d" x="418" y="151"/><use href="#d" x="245" y="129"/><use href="#d" x="223" y="132"/><use href="#d" x="286" y="135"/><use href="#d" x="637" y="159"/><use href="#d" x="493" y="159"/><use href="#d" x="709" y="159"/><use href="#d" x="326" y="136"/><use href="#d" x="611" y="162"/><use href="#d" x="302" y="134"/><use href="#d" x="248" y="125"/><use href="#d" x="347" y="142"/><use href="#d" x="323" y="137"/><use href="#d" x="208" y="134"/><use href="#d" x="323" y="139"/><use href="#d" x="280" y="135"/><use href="#d" x="619" y="158"/><use href="#d" x="232" y="139"/><use href="#d" x="433" y="150"/><use href="#d" x="312" y="132"/><use href="#d" x="246" y="122"/><use href="#d" x="496" y="157"/><use href="#d" x="373" y="153"/><use href="#d" x="422" y="148"/><use href="#d" x="191" y="127"/><use href="#d" x="263" y="121"/><use href="#d" x="583" y="155"/><use href="#d" x="709" y="158"/><use href="#d" x="318" y="129"/><use href="#d" x="715" y="159"/><use href="#d" x="337" y="136"/><use href="#d" x="415" y="155"/><use href="#d" x="336" y="135"/><use href="#d" x="296" y="144"/><use href="#d" x="237" y="132"/><use href="#d" x="608" y="158"/><use href="#d" x="295" y="142"/><use href="#d" x="363" y="145"/><use href="#d" x="622" y="157"/><use href="#d" x="220" y="127"/><use href="#d" x="513" y="161"/><use href="#d" x="645" y="155"/><use href="#d" x="303" y="149"/><use href="#d" x="300" y="129"/><use href="#d" x="604" y="156"/><use href="#d" x="202" y="106"/><use href="#d" x="224" y="149"/><use href="#d" x="240" y="149"/><use href="#d" x="294" y="119"/><use href="#d" x="323" y="158"/><use href="#d" x="325" y="158"/><use href="#d" x="395" y="140"/><use href="#d" x="417" y="162"/><use href="#d" x="427" y="165"/><use href="#d" x="487" y="143"/><use href="#d" x="500" y="148"/><use href="#d" x="452" y="163"/><use href="#d" x="482" y="198"/><use href="#d" x="520" y="184"/><use href="#d" x="539" y="146"/><use href="#d" x="592" y="148"/><use href="#d" x="623" y="147"/><use href="#d" x="538" y="174"/><use href="#d" x="542" y="176"/><use href="#d" x="557" y="171"/><use href="#d" x="564" y="173"/><use href="#d" x="560" y="182"/><use href="#d" x="598" y="170"/><use href="#d" x="623" y="174"/><use href="#d" x="630" y="182"/><use href="#d" x="648" y="174"/><use href="#d" x="660" y="176"/><use href="#d" x="666" y="170"/><use href="#d" x="680" y="175"/><use href="#d" x="194" y="142"/><use href="#d" x="145" y="132"/><use href="#d" x="596" y="344"/><use href="#d" x="150" y="329"/><use href="#d" x="699" y="346"/><use href="#d" x="452" y="345"/><use href="#d" x="286" y="329"/><use href="#d" x="523" y="345"/><use href="#d" x="174" y="330"/><use href="#d" x="178" y="330"/><use href="#d" x="438" y="334"/><use href="#d" x="269" y="331"/><use href="#d" x="483" y="344"/><use href="#d" x="150" y="327"/><use href="#d" x="242" y="329"/><use href="#d" x="571" y="346"/><use href="#d" x="598" y="345"/><use href="#d" x="539" y="345"/><use href="#d" x="575" y="345"/><use href="#d" x="634" y="344"/><use href="#d" x="182" y="329"/><use href="#d" x="685" y="347"/><use href="#d" x="176" y="329"/><use href="#d" x="466" y="344"/><use href="#d" x="557" y="345"/><use href="#d" x="464" y="345"/><use href="#d" x="428" y="330"/><use href="#d" x="172" y="327"/><use href="#d" x="201" y="329"/><use href="#d" x="464" y="344"/><use href="#d" x="589" y="345"/><use href="#d" x="653" y="345"/><use href="#d" x="621" y="345"/><use href="#d" x="634" y="345"/><use href="#d" x="288" y="330"/><use href="#d" x="185" y="329"/><use href="#d" x="349" y="328"/><use href="#d" x="422" y="328"/><use href="#d" x="262" y="332"/><use href="#d" x="277" y="329"/><use href="#d" x="350" y="330"/><use href="#d" x="664" y="345"/><use href="#d" x="472" y="345"/><use href="#d" x="274" y="331"/><use href="#d" x="655" y="345"/><use href="#d" x="334" y="329"/><use href="#d" x="383" y="330"/><use href="#d" x="567" y="345"/><use href="#d" x="639" y="344"/><use href="#d" x="251" y="335"/><use href="#d" x="210" y="328"/><use href="#d" x="563" y="345"/><use href="#d" x="186" y="327"/><use href="#d" x="388" y="332"/><use href="#d" x="393" y="327"/><use href="#d" x="416" y="332"/><use href="#d" x="619" y="345"/><use href="#d" x="516" y="345"/><use href="#d" x="229" y="330"/><use href="#d" x="662" y="345"/><use href="#d" x="532" y="345"/><use href="#d" x="496" y="345"/><use href="#d" x="684" y="342"/><use href="#d" x="384" y="332"/><use href="#d" x="273" y="327"/><use href="#d" x="533" y="344"/><use href="#d" x="303" y="325"/><use href="#d" x="693" y="345"/><use href="#d" x="216" y="329"/><use href="#d" x="685" y="342"/><use href="#d" x="281" y="330"/><use href="#d" x="420" y="329"/><use href="#d" x="189" y="329"/><use href="#d" x="540" y="344"/><use href="#d" x="393" y="331"/><use href="#d" x="453" y="345"/><use href="#d" x="346" y="332"/><use href="#d" x="248" y="332"/><use href="#d" x="395" y="330"/><use href="#d" x="609" y="344"/><use href="#d" x="570" y="345"/><use href="#d" x="600" y="345"/><use href="#d" x="577" y="346"/><use href="#d" x="212" y="331"/><use href="#d" x="463" y="345"/><use href="#d" x="149" y="331"/><use href="#d" x="594" y="346"/><use href="#d" x="266" y="333"/><use href="#d" x="573" y="344"/><use href="#d" x="219" y="333"/><use href="#d" x="614" y="345"/><use href="#d" x="425" y="329"/><use href="#d" x="705" y="344"/><use href="#d" x="696" y="344"/><use href="#d" x="470" y="345"/><use href="#d" x="426" y="330"/><use href="#d" x="475" y="344"/><use href="#d" x="580" y="345"/><use href="#d" x="527" y="345"/><use href="#d" x="694" y="345"/><use href="#d" x="157" y="326"/><use href="#d" x="594" y="344"/><use href="#d" x="382" y="332"/><use href="#d" x="641" y="345"/><use href="#d" x="449" y="345"/><use href="#d" x="377" y="330"/><use href="#d" x="613" y="346"/><use href="#d" x="369" y="332"/><use href="#d" x="227" y="330"/><use href="#d" x="650" y="345"/><use href="#d" x="275" y="332"/><use href="#d" x="716" y="344"/><use href="#d" x="217" y="331"/><use href="#d" x="156" y="331"/><use href="#d" x="629" y="345"/><use href="#d" x="633" y="345"/><use href="#d" x="298" y="332"/><use href="#d" x="195" y="328"/><use href="#d" x="392" y="331"/><use href="#d" x="613" y="345"/><use href="#d" x="232" y="335"/><use href="#d" x="200" y="330"/><use href="#d" x="647" y="345"/><use href="#d" x="632" y="345"/><use href="#d" x="335" y="328"/><use href="#d" x="202" y="329"/><use href="#d" x="311" y="329"/><use href="#d" x="495" y="344"/><use href="#d" x="329" y="326"/><use href="#d" x="671" y="344"/><use href="#d" x="379" y="328"/><use href="#d" x="672" y="346"/><use href="#d" x="589" y="344"/><use href="#d" x="482" y="345"/><use href="#d" x="295" y="326"/><use href="#d" x="556" y="345"/><use href="#d" x="627" y="344"/><use href="#d" x="223" y="332"/><use href="#d" x="525" y="345"/><use href="#d" x="394" y="332"/><use href="#d" x="581" y="345"/><use href="#d" x="179" y="329"/><use href="#d" x="557" y="344"/><use href="#d" x="607" y="345"/><use href="#d" x="297" y="328"/><use href="#d" x="198" y="332"/><use href="#d" x="344" y="329"/><use href="#d" x="650" y="344"/><use href="#d" x="550" y="344"/><use href="#d" x="666" y="344"/><use href="#d" x="242" y="330"/><use href="#d" x="368" y="329"/><use href="#d" x="686" y="344"/><use href="#d" x="207" y="330"/><use href="#d" x="329" y="330"/><use href="#d" x="559" y="344"/><use href="#d" x="305" y="328"/><use href="#d" x="628" y="345"/><use href="#d" x="681" y="343"/><use href="#d" x="264" y="327"/><use href="#d" x="566" y="345"/><use href="#d" x="321" y="327"/><use href="#d" x="328" y="329"/><use href="#d" x="246" y="331"/><use href="#d" x="660" y="345"/><use href="#d" x="223" y="331"/><use href="#d" x="405" y="328"/><use href="#d" x="252" y="329"/><use href="#d" x="309" y="329"/><use href="#d" x="351" y="328"/><use href="#d" x="193" y="333"/><use href="#d" x="675" y="339"/><use href="#d" x="587" y="345"/><use href="#d" x="163" y="329"/><use href="#d" x="147" y="330"/><use href="#d" x="525" y="344"/><use href="#d" x="475" y="345"/><use href="#d" x="422" y="333"/><use href="#d" x="514" y="345"/><use href="#d" x="567" y="344"/><use href="#d" x="681" y="346"/><use href="#d" x="374" y="330"/><use href="#d" x="375" y="328"/><use href="#d" x="260" y="331"/><use href="#d" x="148" y="331"/><use href="#d" x="652" y="345"/><use href="#d" x="317" y="328"/><use href="#d" x="371" y="330"/><use href="#d" x="550" y="345"/><use href="#d" x="297" y="327"/><use href="#d" x="314" y="328"/><use href="#d" x="544" y="346"/><use href="#d" x="549" y="344"/><use href="#d" x="376" y="333"/><use href="#d" x="469" y="344"/><use href="#d" x="612" y="344"/><use href="#d" x="307" y="327"/><use href="#d" x="160" y="328"/><use href="#d" x="330" y="331"/><use href="#d" x="226" y="331"/><use href="#d" x="263" y="331"/><use href="#d" x="673" y="345"/><use href="#d" x="544" y="345"/><use href="#d" x="476" y="345"/><use href="#d" x="295" y="327"/><use href="#d" x="433" y="329"/><use href="#d" x="307" y="326"/><use href="#d" x="152" y="329"/><use href="#d" x="692" y="346"/><use href="#d" x="256" y="333"/><use href="#d" x="451" y="344"/><use href="#d" x="522" y="346"/><use href="#d" x="279" y="333"/><use href="#d" x="386" y="330"/><use href="#d" x="183" y="330"/><use href="#d" x="299" y="327"/><use href="#d" x="410" y="327"/><use href="#d" x="710" y="344"/><use href="#d" x="328" y="326"/><use href="#d" x="313" y="329"/><use href="#d" x="138" y="329"/><use href="#d" x="486" y="344"/><use href="#d" x="648" y="345"/><use href="#d" x="424" y="330"/><use href="#d" x="395" y="329"/><use href="#d" x="234" y="331"/><use href="#d" x="710" y="342"/><use href="#d" x="703" y="346"/><use href="#d" x="352" y="329"/><use href="#d" x="290" y="328"/><use href="#d" x="515" y="345"/><use href="#d" x="312" y="329"/><use href="#d" x="287" y="330"/><use href="#d" x="283" y="333"/><use href="#d" x="268" y="328"/><use href="#d" x="204" y="330"/><use href="#d" x="439" y="327"/><use href="#d" x="644" y="345"/><use href="#d" x="332" y="332"/><use href="#d" x="164" y="329"/><use href="#d" x="188" y="328"/><use href="#d" x="460" y="344"/><use href="#d" x="273" y="331"/><use href="#d" x="222" y="328"/><use href="#d" x="214" y="328"/><use href="#d" x="270" y="331"/><use href="#d" x="199" y="328"/><use href="#d" x="699" y="345"/><use href="#d" x="170" y="328"/><use href="#d" x="663" y="344"/><use href="#d" x="573" y="345"/><use href="#d" x="247" y="333"/><use href="#d" x="334" y="333"/><use href="#d" x="364" y="329"/><use href="#d" x="348" y="330"/><use href="#d" x="235" y="329"/><use href="#d" x="562" y="345"/><use href="#d" x="255" y="331"/><use href="#d" x="430" y="331"/><use href="#d" x="701" y="345"/><use href="#d" x="432" y="329"/><use href="#d" x="168" y="333"/><use href="#d" x="320" y="329"/><use href="#d" x="468" y="345"/><use href="#d" x="232" y="332"/><use href="#d" x="531" y="344"/><use href="#d" x="605" y="346"/><use href="#d" x="563" y="344"/><use href="#d" x="170" y="330"/><use href="#d" x="356" y="327"/><use href="#d" x="611" y="345"/><use href="#d" x="267" y="332"/><use href="#d" x="711" y="343"/><use href="#d" x="518" y="344"/><use href="#d" x="706" y="346"/><use href="#d" x="648" y="346"/><use href="#d" x="521" y="345"/><use href="#d" x="430" y="328"/><use href="#d" x="520" y="344"/><use href="#d" x="290" y="325"/><use href="#d" x="399" y="330"/><use href="#d" x="648" y="344"/><use href="#d" x="244" y="327"/><use href="#d" x="457" y="344"/><use href="#d" x="199" y="329"/><use href="#d" x="351" y="330"/><use href="#d" x="670" y="344"/><use href="#d" x="694" y="347"/><use href="#d" x="234" y="329"/><use href="#d" x="154" y="329"/><use href="#d" x="641" y="344"/><use href="#d" x="478" y="345"/><use href="#d" x="612" y="345"/><use href="#d" x="328" y="331"/><use href="#d" x="592" y="346"/><use href="#d" x="165" y="332"/><use href="#d" x="517" y="345"/><use href="#d" x="487" y="345"/><use href="#d" x="632" y="344"/><use href="#d" x="280" y="329"/><use href="#d" x="666" y="345"/><use href="#d" x="368" y="330"/><use href="#d" x="651" y="345"/><use href="#d" x="610" y="346"/><use href="#d" x="172" y="331"/><use href="#d" x="251" y="330"/><use href="#d" x="499" y="345"/><use href="#d" x="333" y="332"/><use href="#d" x="351" y="327"/><use href="#d" x="572" y="345"/><use href="#d" x="620" y="344"/><use href="#d" x="519" y="345"/><use href="#d" x="373" y="328"/><use href="#d" x="693" y="346"/><use href="#d" x="214" y="331"/><use href="#d" x="227" y="332"/><use href="#d" x="185" y="327"/><use href="#d" x="618" y="345"/><use href="#d" x="221" y="331"/><use href="#d" x="595" y="344"/><use href="#d" x="552" y="345"/><use href="#d" x="539" y="346"/><use href="#d" x="357" y="329"/><use href="#d" x="328" y="328"/><use href="#d" x="579" y="345"/><use href="#d" x="272" y="330"/><use href="#d" x="384" y="331"/><use href="#d" x="307" y="328"/><use href="#d" x="633" y="344"/><use href="#d" x="409" y="329"/><use href="#d" x="433" y="332"/><use href="#d" x="561" y="346"/><use href="#d" x="169" y="330"/><use href="#d" x="293" y="329"/><use href="#d" x="623" y="345"/><use href="#d" x="388" y="330"/><use href="#d" x="252" y="328"/><use href="#d" x="172" y="333"/><use href="#d" x="407" y="332"/><use href="#d" x="198" y="327"/><use href="#d" x="400" y="328"/><use href="#d" x="477" y="344"/><use href="#d" x="564" y="345"/><use href="#d" x="408" y="330"/><use href="#d" x="333" y="330"/><use href="#d" x="688" y="344"/><use href="#d" x="150" y="330"/><use href="#d" x="157" y="328"/><use href="#d" x="474" y="345"/><use href="#d" x="493" y="345"/><use href="#d" x="417" y="331"/><use href="#d" x="622" y="345"/><use href="#d" x="513" y="345"/><use href="#d" x="381" y="331"/><use href="#d" x="554" y="344"/><use href="#d" x="251" y="331"/><use href="#d" x="584" y="345"/><use href="#d" x="652" y="346"/><use href="#d" x="283" y="331"/><use href="#d" x="383" y="329"/><use href="#d" x="323" y="328"/><use href="#d" x="344" y="331"/><use href="#d" x="598" y="346"/><use href="#d" x="522" y="345"/><use href="#d" x="663" y="346"/><use href="#d" x="716" y="345"/><use href="#d" x="565" y="345"/><use href="#d" x="687" y="345"/><use href="#d" x="466" y="345"/><use href="#d" x="667" y="344"/><use href="#d" x="690" y="344"/><use href="#d" x="489" y="345"/><use href="#d" x="711" y="345"/><use href="#d" x="160" y="329"/><use href="#d" x="169" y="333"/><use href="#d" x="261" y="329"/><use href="#d" x="156" y="329"/><use href="#d" x="423" y="334"/><use href="#d" x="318" y="328"/><use href="#d" x="494" y="345"/><use href="#d" x="282" y="332"/><use href="#d" x="252" y="327"/><use href="#d" x="280" y="332"/><use href="#d" x="663" y="345"/><use href="#d" x="242" y="334"/><use href="#d" x="410" y="333"/><use href="#d" x="229" y="332"/><use href="#d" x="537" y="346"/><use href="#d" x="677" y="342"/><use href="#d" x="331" y="329"/><use href="#d" x="281" y="331"/><use href="#d" x="451" y="345"/><use href="#d" x="176" y="331"/><use href="#d" x="245" y="330"/><use href="#d" x="354" y="330"/><use href="#d" x="483" y="345"/><use href="#d" x="485" y="345"/><use href="#d" x="310" y="331"/><use href="#d" x="454" y="344"/><use href="#d" x="422" y="332"/><use href="#d" x="566" y="346"/><use href="#d" x="314" y="326"/><use href="#d" x="238" y="331"/><use href="#d" x="269" y="333"/><use href="#d" x="615" y="345"/><use href="#d" x="679" y="347"/><use href="#d" x="259" y="331"/><use href="#d" x="417" y="332"/><use href="#d" x="216" y="331"/><use href="#d" x="263" y="330"/><use href="#d" x="338" y="332"/><use href="#d" x="576" y="345"/><use href="#d" x="215" y="328"/><use href="#d" x="434" y="327"/><use href="#d" x="536" y="345"/><use href="#d" x="360" y="327"/><use href="#d" x="335" y="330"/><use href="#d" x="149" y="329"/><use href="#d" x="234" y="330"/><use href="#d" x="231" y="327"/><use href="#d" x="393" y="330"/><use href="#d" x="371" y="332"/><use href="#d" x="697" y="346"/><use href="#d" x="546" y="346"/><use href="#d" x="462" y="345"/><use href="#d" x="378" y="331"/><use href="#d" x="602" y="344"/><use href="#d" x="490" y="345"/><use href="#d" x="152" y="330"/><use href="#d" x="703" y="345"/><use href="#d" x="401" y="329"/><use href="#d" x="355" y="330"/><use href="#d" x="338" y="330"/><use href="#d" x="606" y="345"/><use href="#d" x="560" y="343"/><use href="#d" x="297" y="329"/><use href="#d" x="565" y="344"/><use href="#d" x="577" y="345"/><use href="#d" x="586" y="344"/><use href="#d" x="376" y="332"/><use href="#d" x="432" y="331"/><use href="#d" x="325" y="330"/><use href="#d" x="153" y="330"/><use href="#d" x="237" y="331"/><use href="#d" x="491" y="344"/><use href="#d" x="407" y="329"/><use href="#d" x="356" y="331"/><use href="#d" x="423" y="329"/><use href="#d" x="279" y="329"/><use href="#d" x="407" y="331"/><use href="#d" x="217" y="332"/><use href="#d" x="301" y="327"/><use href="#d" x="480" y="345"/><use href="#d" x="337" y="331"/><use href="#d" x="153" y="328"/><use href="#d" x="201" y="330"/><use href="#d" x="686" y="350"/><use href="#d" x="434" y="332"/><use href="#d" x="165" y="331"/><use href="#d" x="465" y="345"/><use href="#d" x="371" y="329"/><use href="#d" x="637" y="345"/><use href="#d" x="239" y="330"/><use href="#d" x="212" y="329"/><use href="#d" x="458" y="345"/><use href="#d" x="593" y="344"/><use href="#d" x="559" y="345"/><use href="#d" x="643" y="345"/><use href="#d" x="661" y="346"/><use href="#d" x="543" y="345"/><use href="#d" x="314" y="327"/><use href="#d" x="202" y="331"/><use href="#d" x="218" y="331"/><use href="#d" x="654" y="346"/><use href="#d" x="144" y="331"/><use href="#d" x="579" y="344"/><use href="#d" x="282" y="330"/><use href="#d" x="405" y="331"/><use href="#d" x="309" y="327"/><use href="#d" x="590" y="344"/><use href="#d" x="379" y="333"/><use href="#d" x="407" y="328"/><use href="#d" x="713" y="342"/><use href="#d" x="546" y="345"/><use href="#d" x="288" y="329"/><use href="#d" x="143" y="330"/><use href="#d" x="462" y="344"/><use href="#d" x="306" y="328"/><use href="#d" x="415" y="327"/><use href="#d" x="516" y="344"/><use href="#d" x="426" y="327"/><use href="#d" x="471" y="345"/><use href="#d" x="616" y="345"/><use href="#d" x="179" y="330"/><use href="#d" x="168" y="330"/><use href="#d" x="403" y="329"/><use href="#d" x="250" y="330"/><use href="#d" x="635" y="344"/><use href="#d" x="268" y="330"/><use href="#d" x="222" y="331"/><use href="#d" x="545" y="346"/><use href="#d" x="437" y="331"/><use href="#d" x="349" y="329"/><use href="#d" x="415" y="333"/><use href="#d" x="271" y="331"/><use href="#d" x="461" y="344"/><use href="#d" x="147" y="328"/><use href="#d" x="456" y="345"/><use href="#d" x="284" y="329"/><use href="#d" x="499" y="344"/><use href="#d" x="353" y="332"/><use href="#d" x="284" y="330"/><use href="#d" x="595" y="345"/><use href="#d" x="367" y="327"/><use href="#d" x="197" y="330"/><use href="#d" x="219" y="331"/><use href="#d" x="300" y="329"/><use href="#d" x="402" y="331"/><use href="#d" x="545" y="344"/><use href="#d" x="541" y="345"/><use href="#d" x="313" y="328"/><use href="#d" x="289" y="328"/><use href="#d" x="665" y="345"/><use href="#d" x="383" y="331"/><use href="#d" x="529" y="344"/><use href="#d" x="238" y="329"/><use href="#d" x="163" y="330"/><use href="#d" x="197" y="331"/><use href="#d" x="144" y="329"/><use href="#d" x="704" y="345"/><use href="#d" x="366" y="327"/><use href="#d" x="419" y="331"/><use href="#d" x="170" y="329"/><use href="#d" x="169" y="328"/><use href="#d" x="148" y="330"/><use href="#d" x="392" y="333"/><use href="#d" x="463" y="344"/><use href="#d" x="645" y="345"/><use href="#d" x="238" y="326"/><use href="#d" x="460" y="345"/><use href="#d" x="440" y="334"/><use href="#d" x="542" y="344"/><use href="#d" x="518" y="346"/><use href="#d" x="372" y="328"/><use href="#d" x="186" y="329"/><use href="#d" x="303" y="327"/><use href="#d" x="450" y="345"/><use href="#d" x="358" y="330"/><use href="#d" x="203" y="329"/><use href="#d" x="347" y="332"/><use href="#d" x="707" y="345"/><use href="#d" x="689" y="343"/><use href="#d" x="348" y="328"/><use href="#d" x="412" y="331"/><use href="#d" x="178" y="332"/><use href="#d" x="178" y="329"/><use href="#d" x="255" y="328"/><use href="#d" x="142" y="329"/><use href="#d" x="424" y="331"/><use href="#d" x="388" y="329"/><use href="#d" x="667" y="346"/><use href="#d" x="350" y="332"/><use href="#d" x="259" y="330"/><use href="#d" x="575" y="346"/><use href="#d" x="269" y="326"/><use href="#d" x="388" y="328"/><use href="#d" x="193" y="328"/><use href="#d" x="155" y="329"/><use href="#d" x="210" y="331"/><use href="#d" x="259" y="332"/><use href="#d" x="631" y="345"/><use href="#d" x="617" y="346"/><use href="#d" x="415" y="331"/><use href="#d" x="465" y="344"/><use href="#d" x="276" y="332"/><use href="#d" x="410" y="330"/><use href="#d" x="677" y="346"/><use href="#d" x="657" y="346"/><use href="#d" x="362" y="332"/><use href="#d" x="603" y="346"/><use href="#d" x="676" y="344"/><use href="#d" x="673" y="346"/><use href="#d" x="298" y="328"/><use href="#d" x="261" y="331"/><use href="#d" x="623" y="346"/><use href="#d" x="662" y="346"/><use href="#d" x="437" y="330"/><use href="#d" x="161" y="332"/><use href="#d" x="639" y="345"/><use href="#d" x="656" y="345"/><use href="#d" x="347" y="331"/><use href="#d" x="385" y="333"/><use href="#d" x="603" y="344"/><use href="#d" x="570" y="344"/><use href="#d" x="587" y="344"/><use href="#d" x="334" y="331"/><use href="#d" x="582" y="345"/><use href="#d" x="686" y="342"/><use href="#d" x="157" y="330"/><use href="#d" x="551" y="345"/><use href="#d" x="227" y="329"/><use href="#d" x="320" y="327"/><use href="#d" x="705" y="345"/><use href="#d" x="204" y="331"/><use href="#d" x="604" y="344"/><use href="#d" x="713" y="344"/><use href="#d" x="666" y="346"/><use href="#d" x="700" y="345"/><use href="#d" x="194" y="329"/><use href="#d" x="689" y="346"/><use href="#d" x="639" y="346"/><use href="#d" x="207" y="331"/><use href="#d" x="601" y="345"/><use href="#d" x="440" y="330"/><use href="#d" x="308" y="328"/><use href="#d" x="616" y="346"/><use href="#d" x="545" y="345"/><use href="#d" x="638" y="346"/><use href="#d" x="552" y="344"/><use href="#d" x="266" y="331"/><use href="#d" x="486" y="345"/><use href="#d" x="628" y="346"/><use href="#d" x="269" y="334"/><use href="#d" x="362" y="325"/><use href="#d" x="139" y="330"/><use href="#d" x="716" y="343"/><use href="#d" x="384" y="330"/><use href="#d" x="300" y="328"/><use href="#d" x="403" y="330"/><use href="#d" x="496" y="344"/><use href="#d" x="385" y="331"/><use href="#d" x="306" y="329"/><use href="#d" x="294" y="325"/><use href="#d" x="303" y="328"/><use href="#d" x="526" y="346"/><use href="#d" x="387" y="329"/><use href="#d" x="153" y="329"/><use href="#d" x="162" y="331"/><use href="#d" x="159" y="328"/><use href="#d" x="570" y="346"/><use href="#d" x="151" y="330"/><use href="#d" x="234" y="334"/><use href="#d" x="228" y="328"/><use href="#d" x="605" y="344"/><use href="#d" x="208" y="329"/><use href="#d" x="193" y="330"/><use href="#d" x="377" y="326"/><use href="#d" x="529" y="345"/><use href="#d" x="498" y="345"/><use href="#d" x="635" y="345"/><use href="#d" x="698" y="345"/><use href="#d" x="548" y="344"/><use href="#d" x="621" y="346"/><use href="#d" x="158" y="329"/><use href="#d" x="279" y="331"/><use href="#d" x="234" y="332"/><use href="#d" x="205" y="330"/><use href="#d" x="427" y="328"/><use href="#d" x="680" y="336"/><use href="#d" x="295" y="325"/><use href="#d" x="547" y="344"/><use href="#d" x="146" y="328"/><use href="#d" x="294" y="328"/><use href="#d" x="709" y="346"/><use href="#d" x="316" y="330"/><use href="#d" x="250" y="335"/><use href="#d" x="138" y="330"/><use href="#d" x="393" y="328"/><use href="#d" x="694" y="346"/><use href="#d" x="148" y="332"/><use href="#d" x="278" y="329"/><use href="#d" x="534" y="345"/><use href="#d" x="233" y="332"/><use href="#d" x="166" y="329"/><use href="#d" x="268" y="333"/><use href="#d" x="422" y="329"/><use href="#d" x="278" y="331"/><use href="#d" x="426" y="333"/><use href="#d" x="708" y="346"/><use href="#d" x="403" y="332"/><use href="#d" x="332" y="328"/><use href="#d" x="257" y="332"/><use href="#d" x="608" y="344"/><use href="#d" x="461" y="345"/><use href="#d" x="624" y="345"/><use href="#d" x="184" y="330"/><use href="#d" x="562" y="344"/><use href="#d" x="211" y="329"/><use href="#d" x="278" y="333"/><use href="#d" x="430" y="326"/><use href="#d" x="165" y="329"/><use href="#d" x="494" y="344"/><use href="#d" x="484" y="344"/><use href="#d" x="237" y="332"/><use href="#d" x="246" y="330"/><use href="#d" x="678" y="336"/><use href="#d" x="646" y="345"/><use href="#d" x="519" y="346"/><use href="#d" x="657" y="344"/><use href="#d" x="184" y="331"/><use href="#d" x="274" y="332"/><use href="#d" x="327" y="329"/><use href="#d" x="390" y="333"/><use href="#d" x="166" y="330"/><use href="#d" x="218" y="332"/><use href="#d" x="456" y="344"/><use href="#d" x="554" y="345"/><use href="#d" x="400" y="332"/><use href="#d" x="208" y="332"/><use href="#d" x="528" y="344"/><use href="#d" x="302" y="327"/><use href="#d" x="206" y="331"/><use href="#d" x="672" y="345"/><use href="#d" x="339" y="332"/><use href="#d" x="243" y="330"/><use href="#d" x="287" y="331"/><use href="#d" x="586" y="346"/><use href="#d" x="169" y="332"/><use href="#d" x="300" y="330"/><use href="#d" x="395" y="332"/><use href="#d" x="396" y="330"/><use href="#d" x="155" y="330"/><use href="#d" x="533" y="345"/><use href="#d" x="208" y="328"/><use href="#d" x="640" y="346"/><use href="#d" x="171" y="330"/><use href="#d" x="677" y="352"/><use href="#d" x="259" y="328"/><use href="#d" x="369" y="328"/><use href="#d" x="262" y="331"/><use href="#d" x="173" y="332"/><use href="#d" x="639" y="347"/><use href="#d" x="561" y="343"/><use href="#d" x="391" y="332"/><use href="#d" x="139" y="329"/><use href="#d" x="220" y="328"/><use href="#d" x="395" y="328"/><use href="#d" x="394" y="329"/><use href="#d" x="304" y="329"/><use href="#d" x="526" y="345"/><use href="#d" x="141" y="331"/><use href="#d" x="174" y="329"/><use href="#d" x="667" y="347"/><use href="#d" x="634" y="346"/><use href="#d" x="708" y="344"/><use href="#d" x="293" y="327"/><use href="#d" x="458" y="344"/><use href="#d" x="261" y="332"/><use href="#d" x="615" y="344"/><use href="#d" x="352" y="330"/><use href="#d" x="139" y="331"/><use href="#d" x="630" y="344"/><use href="#d" x="283" y="330"/><use href="#d" x="212" y="328"/><use href="#d" x="373" y="331"/><use href="#d" x="631" y="344"/><use href="#d" x="202" y="330"/><use href="#d" x="697" y="345"/><use href="#d" x="684" y="349"/><use href="#d" x="323" y="326"/><use href="#d" x="497" y="344"/><use href="#d" x="245" y="329"/><use href="#d" x="642" y="344"/><use href="#d" x="216" y="327"/><use href="#d" x="235" y="331"/><use href="#d" x="305" y="326"/><use href="#d" x="214" y="330"/><use href="#d" x="330" y="329"/><use href="#d" x="213" y="329"/><use href="#d" x="516" y="346"/><use href="#d" x="602" y="345"/><use href="#d" x="269" y="328"/><use href="#d" x="492" y="344"/><use href="#d" x="142" y="331"/><use href="#d" x="294" y="327"/><use href="#d" x="308" y="329"/><use href="#d" x="549" y="346"/><use href="#d" x="640" y="345"/><use href="#d" x="398" y="328"/><use href="#d" x="215" y="331"/><use href="#d" x="678" y="347"/><use href="#d" x="394" y="330"/><use href="#d" x="697" y="344"/><use href="#d" x="221" y="332"/><use href="#d" x="151" y="331"/><use href="#d" x="340" y="329"/><use href="#d" x="401" y="328"/><use href="#d" x="367" y="329"/><use href="#d" x="350" y="327"/><use href="#d" x="276" y="330"/><use href="#d" x="421" y="331"/><use href="#d" x="659" y="346"/><use href="#d" x="201" y="332"/><use href="#d" x="473" y="344"/><use href="#d" x="365" y="330"/><use href="#d" x="352" y="327"/><use href="#d" x="199" y="330"/><use href="#d" x="345" y="327"/><use href="#d" x="416" y="331"/><use href="#d" x="649" y="345"/><use href="#d" x="484" y="345"/><use href="#d" x="569" y="345"/><use href="#d" x="157" y="329"/><use href="#d" x="303" y="331"/><use href="#d" x="277" y="328"/><use href="#d" x="523" y="344"/><use href="#d" x="538" y="345"/><use href="#d" x="668" y="346"/><use href="#d" x="222" y="332"/><use href="#d" x="408" y="331"/><use href="#d" x="567" y="346"/><use href="#d" x="575" y="344"/><use href="#d" x="294" y="329"/><use href="#d" x="370" y="327"/><use href="#d" x="571" y="345"/><use href="#d" x="232" y="333"/><use href="#d" x="667" y="345"/><use href="#d" x="373" y="330"/><use href="#d" x="389" y="331"/><use href="#d" x="164" y="328"/><use href="#d" x="558" y="344"/><use href="#d" x="547" y="345"/><use href="#d" x="290" y="326"/><use href="#d" x="381" y="329"/><use href="#d" x="178" y="328"/><use href="#d" x="325" y="328"/><use href="#d" x="436" y="329"/><use href="#d" x="533" y="346"/><use href="#d" x="177" y="329"/><use href="#d" x="345" y="326"/><use href="#d" x="555" y="346"/><use href="#d" x="349" y="331"/><use href="#d" x="194" y="328"/><use href="#d" x="141" y="329"/><use href="#d" x="526" y="344"/><use href="#d" x="591" y="345"/><use href="#d" x="671" y="345"/><use href="#d" x="353" y="326"/><use href="#d" x="143" y="331"/><use href="#d" x="654" y="345"/><use href="#d" x="397" y="330"/><use href="#d" x="147" y="333"/><use href="#d" x="378" y="332"/><use href="#d" x="479" y="344"/><use href="#d" x="682" y="334"/><use href="#d" x="190" y="330"/><use href="#d" x="537" y="345"/><use href="#d" x="283" y="329"/><use href="#d" x="427" y="331"/><use href="#d" x="351" y="329"/><use href="#d" x="605" y="345"/><use href="#d" x="232" y="331"/><use href="#d" x="286" y="330"/><use href="#d" x="358" y="329"/><use href="#d" x="467" y="345"/><use href="#d" x="231" y="333"/><use href="#d" x="530" y="344"/><use href="#d" x="341" y="332"/><use href="#d" x="690" y="346"/><use href="#d" x="192" y="328"/><use href="#d" x="270" y="332"/><use href="#d" x="472" y="344"/><use href="#d" x="433" y="331"/><use href="#d" x="478" y="344"/><use href="#d" x="497" y="345"/><use href="#d" x="239" y="333"/><use href="#d" x="687" y="348"/><use href="#d" x="618" y="346"/><use href="#d" x="145" y="331"/><use href="#d" x="530" y="345"/><use href="#d" x="441" y="328"/><use href="#d" x="469" y="345"/><use href="#d" x="271" y="328"/><use href="#d" x="238" y="333"/><use href="#d" x="267" y="333"/><use href="#d" x="147" y="329"/><use href="#d" x="418" y="333"/><use href="#d" x="210" y="330"/><use href="#d" x="203" y="330"/><use href="#d" x="286" y="325"/><use href="#d" x="253" y="333"/><use href="#d" x="414" y="330"/><use href="#d" x="373" y="326"/><use href="#d" x="165" y="328"/><use href="#d" x="379" y="330"/><use href="#d" x="360" y="330"/><use href="#d" x="524" y="345"/><use href="#d" x="555" y="345"/><use href="#d" x="149" y="330"/><use href="#d" x="244" y="328"/><use href="#d" x="627" y="345"/><use href="#d" x="457" y="345"/><use href="#d" x="148" y="327"/><use href="#d" x="359" y="329"/><use href="#d" x="168" y="332"/><use href="#d" x="145" y="328"/><use href="#d" x="349" y="333"/><use href="#d" x="410" y="334"/><use href="#d" x="500" y="345"/><use href="#d" x="318" y="327"/><use href="#d" x="287" y="328"/><use href="#d" x="208" y="330"/><use href="#d" x="195" y="331"/><use href="#d" x="450" y="344"/><use href="#d" x="520" y="345"/><use href="#d" x="247" y="330"/><use href="#d" x="561" y="345"/><use href="#d" x="546" y="344"/><use href="#d" x="583" y="346"/><use href="#d" x="538" y="344"/><use href="#d" x="287" y="327"/><use href="#d" x="590" y="346"/><use href="#d" x="676" y="343"/><use href="#d" x="671" y="346"/><use href="#d" x="513" y="346"/><use href="#d" x="255" y="329"/><use href="#d" x="226" y="330"/><use href="#d" x="377" y="331"/><use href="#d" x="262" y="328"/><use href="#d" x="453" y="344"/><use href="#d" x="699" y="344"/><use href="#d" x="186" y="331"/><use href="#d" x="362" y="327"/><use href="#d" x="410" y="329"/><use href="#d" x="177" y="330"/><use href="#d" x="140" y="329"/><use href="#d" x="368" y="326"/><use href="#d" x="343" y="331"/><use href="#d" x="670" y="345"/><use href="#d" x="432" y="328"/><use href="#d" x="441" y="331"/><use href="#d" x="685" y="346"/><use href="#d" x="553" y="345"/><use href="#d" x="512" y="345"/><use href="#d" x="226" y="332"/><use href="#d" x="244" y="331"/><use href="#d" x="492" y="345"/><use href="#d" x="147" y="331"/><use href="#d" x="401" y="327"/><use href="#d" x="316" y="328"/><use href="#d" x="344" y="328"/><use href="#d" x="209" y="330"/><use href="#d" x="189" y="330"/><use href="#d" x="604" y="345"/><use href="#d" x="144" y="328"/><use href="#d" x="683" y="336"/><use href="#d" x="244" y="334"/><use href="#d" x="404" y="327"/><use href="#d" x="210" y="333"/><use href="#d" x="596" y="345"/><use href="#d" x="272" y="329"/><use href="#d" x="230" y="328"/><use href="#d" x="432" y="332"/><use href="#d" x="195" y="329"/><use href="#d" x="394" y="331"/><use href="#d" x="309" y="328"/><use href="#d" x="257" y="331"/><use href="#d" x="404" y="332"/><use href="#d" x="348" y="331"/><use href="#d" x="379" y="326"/><use href="#d" x="537" y="344"/><use href="#d" x="586" y="345"/><use href="#d" x="700" y="346"/><use href="#d" x="430" y="329"/><use href="#d" x="253" y="332"/><use href="#d" x="177" y="328"/><use href="#d" x="147" y="332"/><use href="#d" x="343" y="329"/><use href="#d" x="442" y="331"/><use href="#d" x="273" y="332"/><use href="#d" x="376" y="331"/><use href="#d" x="334" y="330"/><use href="#d" x="488" y="344"/><use href="#d" x="172" y="332"/><use href="#d" x="143" y="328"/><use href="#d" x="324" y="332"/><use href="#d" x="689" y="347"/><use href="#d" x="672" y="348"/><use href="#d" x="691" y="346"/><use href="#d" x="684" y="347"/><use href="#d" x="431" y="330"/><use href="#d" x="310" y="327"/><use href="#d" x="156" y="327"/><use href="#d" x="295" y="328"/><use href="#d" x="215" y="330"/><use href="#d" x="156" y="330"/><use href="#d" x="242" y="327"/><use href="#d" x="713" y="345"/><use href="#d" x="376" y="328"/><use href="#d" x="400" y="331"/><use href="#d" x="281" y="328"/><use href="#d" x="327" y="328"/><use href="#d" x="339" y="330"/><use href="#d" x="406" y="331"/><use href="#d" x="683" y="347"/><use href="#d" x="676" y="341"/><use href="#d" x="187" y="332"/><use href="#d" x="572" y="346"/><use href="#d" x="645" y="346"/><use href="#d" x="480" y="334"/><use href="#d" x="548" y="355"/><use href="#d" x="560" y="356"/><use href="#d" x="566" y="352"/><use href="#d" x="592" y="350"/><use href="#d" x="604" y="351"/><use href="#d" x="631" y="351"/><use href="#d" x="666" y="354"/><use href="#d" x="666" y="350"/><use href="#d" x="680" y="363"/><use href="#d" x="689" y="356"/><use href="#d" x="665" y="338"/><use href="#d" x="704" y="349"/><use href="#d" x="282" y="505"/><use href="#d" x="531" y="508"/><use href="#d" x="706" y="510"/><use href="#d" x="488" y="509"/><use href="#d" x="456" y="510"/><use href="#d" x="357" y="505"/><use href="#d" x="699" y="510"/><use href="#d" x="166" y="498"/><use href="#d" x="694" y="507"/><use href="#d" x="715" y="508"/><use href="#d" x="423" y="511"/><use href="#d" x="330" y="510"/><use href="#d" x="242" y="505"/><use href="#d" x="545" y="510"/><use href="#d" x="611" y="512"/><use href="#d" x="540" y="511"/><use href="#d" x="555" y="509"/><use href="#d" x="157" y="497"/><use href="#d" x="258" y="506"/><use href="#d" x="267" y="501"/><use href="#d" x="499" y="510"/><use href="#d" x="374" y="510"/><use href="#d" x="344" y="507"/><use href="#d" x="167" y="495"/><use href="#d" x="426" y="514"/><use href="#d" x="628" y="512"/><use href="#d" x="300" y="506"/><use href="#d" x="650" y="511"/><use href="#d" x="376" y="512"/><use href="#d" x="223" y="501"/><use href="#d" x="515" y="510"/><use href="#d" x="138" y="496"/><use href="#d" x="370" y="513"/><use href="#d" x="157" y="499"/><use href="#d" x="427" y="514"/><use href="#d" x="554" y="510"/><use href="#d" x="411" y="513"/><use href="#d" x="211" y="501"/><use href="#d" x="551" y="511"/><use href="#d" x="618" y="511"/><use href="#d" x="613" y="508"/><use href="#d" x="269" y="506"/><use href="#d" x="417" y="511"/><use href="#d" x="535" y="511"/><use href="#d" x="270" y="499"/><use href="#d" x="472" y="509"/><use href="#d" x="580" y="510"/><use href="#d" x="316" y="509"/><use href="#d" x="565" y="509"/><use href="#d" x="429" y="511"/><use href="#d" x="346" y="509"/><use href="#d" x="423" y="515"/><use href="#d" x="374" y="511"/><use href="#d" x="584" y="508"/><use href="#d" x="409" y="512"/><use href="#d" x="680" y="508"/><use href="#d" x="709" y="507"/><use href="#d" x="177" y="496"/><use href="#d" x="417" y="514"/><use href="#d" x="450" y="509"/><use href="#d" x="354" y="506"/><use href="#d" x="303" y="510"/><use href="#d" x="647" y="512"/><use href="#d" x="189" y="502"/><use href="#d" x="446" y="510"/><use href="#d" x="689" y="509"/><use href="#d" x="276" y="503"/><use href="#d" x="250" y="498"/><use href="#d" x="434" y="510"/><use href="#d" x="231" y="501"/><use href="#d" x="236" y="499"/><use href="#d" x="213" y="502"/><use href="#d" x="340" y="510"/><use href="#d" x="178" y="495"/><use href="#d" x="254" y="497"/><use href="#d" x="396" y="514"/><use href="#d" x="272" y="508"/><use href="#d" x="203" y="504"/><use href="#d" x="537" y="507"/><use href="#d" x="444" y="512"/><use href="#d" x="407" y="516"/><use href="#d" x="332" y="505"/><use href="#d" x="298" y="503"/><use href="#d" x="417" y="516"/><use href="#d" x="566" y="508"/><use href="#d" x="662" y="508"/><use href="#d" x="692" y="516"/><use href="#d" x="432" y="513"/><use href="#d" x="700" y="510"/><use href="#d" x="672" y="511"/><use href="#d" x="539" y="512"/><use href="#d" x="577" y="511"/><use href="#d" x="395" y="514"/><use href="#d" x="248" y="504"/><use href="#d" x="615" y="511"/><use href="#d" x="304" y="506"/><use href="#d" x="224" y="495"/><use href="#d" x="406" y="514"/><use href="#d" x="289" y="501"/><use href="#d" x="442" y="512"/><use href="#d" x="672" y="510"/><use href="#d" x="379" y="513"/><use href="#d" x="498" y="510"/><use href="#d" x="310" y="507"/><use href="#d" x="622" y="511"/><use href="#d" x="312" y="512"/><use href="#d" x="386" y="511"/><use href="#d" x="247" y="507"/><use href="#d" x="201" y="505"/><use href="#d" x="434" y="513"/><use href="#d" x="373" y="513"/><use href="#d" x="549" y="510"/><use href="#d" x="287" y="506"/><use href="#d" x="317" y="506"/><use href="#d" x="240" y="501"/><use href="#d" x="434" y="514"/><use href="#d" x="462" y="510"/><use href="#d" x="416" y="512"/><use href="#d" x="319" y="510"/><use href="#d" x="702" y="512"/><use href="#d" x="266" y="504"/><use href="#d" x="448" y="509"/><use href="#d" x="467" y="509"/><use href="#d" x="514" y="510"/><use href="#d" x="175" y="498"/><use href="#d" x="600" y="509"/><use href="#d" x="203" y="503"/><use href="#d" x="588" y="510"/><use href="#d" x="276" y="504"/><use href="#d" x="376" y="515"/><use href="#d" x="228" y="503"/><use href="#d" x="265" y="504"/><use href="#d" x="290" y="502"/><use href="#d" x="336" y="511"/><use href="#d" x="633" y="508"/><use href="#d" x="653" y="511"/><use href="#d" x="612" y="508"/><use href="#d" x="517" y="506"/><use href="#d" x="366" y="504"/><use href="#d" x="201" y="500"/><use href="#d" x="600" y="510"/><use href="#d" x="393" y="513"/><use href="#d" x="391" y="512"/><use href="#d" x="258" y="497"/><use href="#d" x="418" y="513"/><use href="#d" x="386" y="512"/><use href="#d" x="536" y="506"/><use href="#d" x="582" y="509"/><use href="#d" x="461" y="509"/><use href="#d" x="442" y="511"/><use href="#d" x="643" y="511"/><use href="#d" x="682" y="504"/><use href="#d" x="418" y="516"/><use href="#d" x="635" y="512"/><use href="#d" x="267" y="508"/><use href="#d" x="295" y="508"/><use href="#d" x="570" y="512"/><use href="#d" x="323" y="508"/><use href="#d" x="271" y="501"/><use href="#d" x="526" y="505"/><use href="#d" x="270" y="505"/><use href="#d" x="714" y="510"/><use href="#d" x="608" y="508"/><use href="#d" x="562" y="513"/><use href="#d" x="452" y="510"/><use href="#d" x="376" y="510"/><use href="#d" x="232" y="501"/><use href="#d" x="435" y="515"/><use href="#d" x="215" y="496"/><use href="#d" x="500" y="510"/><use href="#d" x="167" y="497"/><use href="#d" x="350" y="504"/><use href="#d" x="355" y="510"/><use href="#d" x="316" y="501"/><use href="#d" x="366" y="511"/><use href="#d" x="375" y="512"/><use href="#d" x="254" y="500"/><use href="#d" x="440" y="511"/><use href="#d" x="344" y="505"/><use href="#d" x="499" y="512"/><use href="#d" x="174" y="499"/><use href="#d" x="526" y="509"/><use href="#d" x="378" y="513"/><use href="#d" x="392" y="512"/><use href="#d" x="288" y="504"/><use href="#d" x="183" y="497"/><use href="#d" x="675" y="509"/><use href="#d" x="460" y="508"/><use href="#d" x="279" y="505"/><use href="#d" x="606" y="511"/><use href="#d" x="185" y="498"/><use href="#d" x="701" y="511"/><use href="#d" x="234" y="502"/><use href="#d" x="630" y="509"/><use href="#d" x="667" y="508"/><use href="#d" x="670" y="512"/><use href="#d" x="315" y="508"/><use href="#d" x="433" y="513"/><use href="#d" x="138" y="498"/><use href="#d" x="206" y="497"/><use href="#d" x="557" y="509"/><use href="#d" x="271" y="502"/><use href="#d" x="317" y="505"/><use href="#d" x="641" y="509"/><use href="#d" x="704" y="509"/><use href="#d" x="656" y="513"/><use href="#d" x="226" y="498"/><use href="#d" x="643" y="512"/><use href="#d" x="571" y="508"/><use href="#d" x="560" y="510"/><use href="#d" x="711" y="508"/><use href="#d" x="576" y="511"/><use href="#d" x="218" y="498"/><use href="#d" x="380" y="512"/><use href="#d" x="594" y="511"/><use href="#d" x="225" y="498"/><use href="#d" x="354" y="509"/><use href="#d" x="432" y="515"/><use href="#d" x="585" y="511"/><use href="#d" x="382" y="515"/><use href="#d" x="553" y="509"/><use href="#d" x="139" y="499"/><use href="#d" x="449" y="509"/><use href="#d" x="492" y="508"/><use href="#d" x="297" y="505"/><use href="#d" x="477" y="513"/><use href="#d" x="260" y="499"/><use href="#d" x="409" y="517"/><use href="#d" x="211" y="495"/><use href="#d" x="500" y="511"/><use href="#d" x="229" y="503"/><use href="#d" x="256" y="500"/><use href="#d" x="706" y="506"/><use href="#d" x="149" y="500"/><use href="#d" x="166" y="499"/><use href="#d" x="625" y="511"/><use href="#d" x="532" y="510"/><use href="#d" x="412" y="512"/><use href="#d" x="602" y="513"/><use href="#d" x="168" y="499"/><use href="#d" x="312" y="505"/><use href="#d" x="418" y="517"/><use href="#d" x="459" y="510"/><use href="#d" x="433" y="515"/><use href="#d" x="483" y="509"/><use href="#d" x="564" y="508"/><use href="#d" x="249" y="502"/><use href="#d" x="280" y="504"/><use href="#d" x="621" y="513"/><use href="#d" x="576" y="508"/><use href="#d" x="613" y="510"/><use href="#d" x="341" y="506"/><use href="#d" x="652" y="508"/><use href="#d" x="335" y="504"/><use href="#d" x="465" y="509"/><use href="#d" x="520" y="513"/><use href="#d" x="500" y="508"/><use href="#d" x="470" y="508"/><use href="#d" x="525" y="507"/><use href="#d" x="297" y="507"/><use href="#d" x="687" y="512"/><use href="#d" x="410" y="513"/><use href="#d" x="285" y="505"/><use href="#d" x="293" y="501"/><use href="#d" x="467" y="510"/><use href="#d" x="612" y="510"/><use href="#d" x="428" y="511"/><use href="#d" x="440" y="516"/><use href="#d" x="636" y="512"/><use href="#d" x="226" y="499"/><use href="#d" x="573" y="510"/><use href="#d" x="623" y="507"/><use href="#d" x="176" y="496"/><use href="#d" x="578" y="512"/><use href="#d" x="467" y="508"/><use href="#d" x="360" y="506"/><use href="#d" x="651" y="512"/><use href="#d" x="140" y="494"/><use href="#d" x="690" y="507"/><use href="#d" x="689" y="512"/><use href="#d" x="348" y="506"/><use href="#d" x="569" y="508"/><use href="#d" x="160" y="496"/><use href="#d" x="253" y="502"/><use href="#d" x="603" y="507"/><use href="#d" x="183" y="499"/><use href="#d" x="195" y="498"/><use href="#d" x="453" y="510"/><use href="#d" x="279" y="508"/><use href="#d" x="269" y="502"/><use href="#d" x="187" y="497"/><use href="#d" x="463" y="509"/><use href="#d" x="659" y="510"/><use href="#d" x="693" y="510"/><use href="#d" x="464" y="507"/><use href="#d" x="181" y="499"/><use href="#d" x="657" y="507"/><use href="#d" x="405" y="510"/><use href="#d" x="368" y="513"/><use href="#d" x="464" y="511"/><use href="#d" x="545" y="509"/><use href="#d" x="368" y="509"/><use href="#d" x="607" y="512"/><use href="#d" x="190" y="496"/><use href="#d" x="322" y="506"/><use href="#d" x="292" y="507"/><use href="#d" x="659" y="511"/><use href="#d" x="586" y="508"/><use href="#d" x="556" y="512"/><use href="#d" x="662" y="512"/><use href="#d" x="194" y="499"/><use href="#d" x="353" y="507"/><use href="#d" x="448" y="510"/><use href="#d" x="396" y="511"/><use href="#d" x="348" y="507"/><use href="#d" x="205" y="499"/><use href="#d" x="685" y="510"/><use href="#d" x="213" y="499"/><use href="#d" x="594" y="509"/><use href="#d" x="684" y="509"/><use href="#d" x="413" y="515"/><use href="#d" x="274" y="506"/><use href="#d" x="414" y="513"/><use href="#d" x="418" y="512"/><use href="#d" x="329" y="510"/><use href="#d" x="287" y="505"/><use href="#d" x="153" y="497"/><use href="#d" x="233" y="496"/><use href="#d" x="315" y="506"/><use href="#d" x="173" y="499"/><use href="#d" x="596" y="509"/><use href="#d" x="218" y="499"/><use href="#d" x="161" y="500"/><use href="#d" x="527" y="507"/><use href="#d" x="403" y="511"/><use href="#d" x="238" y="500"/><use href="#d" x="538" y="507"/><use href="#d" x="621" y="511"/><use href="#d" x="304" y="507"/><use href="#d" x="189" y="498"/><use href="#d" x="182" y="496"/><use href="#d" x="439" y="511"/><use href="#d" x="677" y="508"/><use href="#d" x="353" y="506"/><use href="#d" x="715" y="511"/><use href="#d" x="450" y="508"/><use href="#d" x="311" y="505"/><use href="#d" x="200" y="498"/><use href="#d" x="499" y="511"/><use href="#d" x="547" y="511"/><use href="#d" x="609" y="510"/><use href="#d" x="295" y="507"/><use href="#d" x="373" y="510"/><use href="#d" x="466" y="511"/><use href="#d" x="496" y="509"/><use href="#d" x="166" y="500"/><use href="#d" x="251" y="505"/><use href="#d" x="284" y="508"/><use href="#d" x="285" y="503"/><use href="#d" x="684" y="517"/><use href="#d" x="441" y="515"/><use href="#d" x="464" y="510"/><use href="#d" x="535" y="507"/><use href="#d" x="411" y="514"/><use href="#d" x="300" y="499"/><use href="#d" x="261" y="506"/><use href="#d" x="301" y="507"/><use href="#d" x="215" y="500"/><use href="#d" x="226" y="505"/><use href="#d" x="589" y="511"/><use href="#d" x="650" y="509"/><use href="#d" x="152" y="500"/><use href="#d" x="546" y="508"/><use href="#d" x="469" y="508"/><use href="#d" x="257" y="502"/><use href="#d" x="477" y="510"/><use href="#d" x="170" y="495"/><use href="#d" x="685" y="508"/><use href="#d" x="138" y="495"/><use href="#d" x="549" y="513"/><use href="#d" x="437" y="512"/><use href="#d" x="410" y="512"/><use href="#d" x="452" y="512"/><use href="#d" x="365" y="506"/><use href="#d" x="368" y="506"/><use href="#d" x="694" y="511"/><use href="#d" x="575" y="509"/><use href="#d" x="283" y="508"/><use href="#d" x="359" y="508"/><use href="#d" x="554" y="507"/><use href="#d" x="331" y="507"/><use href="#d" x="695" y="510"/><use href="#d" x="692" y="514"/><use href="#d" x="481" y="511"/><use href="#d" x="703" y="509"/><use href="#d" x="657" y="510"/><use href="#d" x="622" y="509"/><use href="#d" x="324" y="508"/><use href="#d" x="305" y="506"/><use href="#d" x="660" y="508"/><use href="#d" x="363" y="509"/><use href="#d" x="685" y="511"/><use href="#d" x="438" y="512"/><use href="#d" x="546" y="507"/><use href="#d" x="641" y="511"/><use href="#d" x="344" y="509"/><use href="#d" x="429" y="515"/><use href="#d" x="327" y="511"/><use href="#d" x="711" y="510"/><use href="#d" x="352" y="505"/><use href="#d" x="603" y="509"/><use href="#d" x="329" y="505"/><use href="#d" x="543" y="510"/><use href="#d" x="674" y="511"/><use href="#d" x="355" y="508"/><use href="#d" x="593" y="511"/><use href="#d" x="636" y="510"/><use href="#d" x="299" y="506"/><use href="#d" x="410" y="511"/><use href="#d" x="152" y="502"/><use href="#d" x="513" y="508"/><use href="#d" x="632" y="509"/><use href="#d" x="226" y="494"/><use href="#d" x="147" y="501"/><use href="#d" x="377" y="514"/><use href="#d" x="339" y="506"/><use href="#d" x="445" y="511"/><use href="#d" x="143" y="500"/><use href="#d" x="160" y="500"/><use href="#d" x="520" y="510"/><use href="#d" x="452" y="506"/><use href="#d" x="165" y="499"/><use href="#d" x="557" y="510"/><use href="#d" x="255" y="499"/><use href="#d" x="627" y="509"/><use href="#d" x="563" y="510"/><use href="#d" x="326" y="503"/><use href="#d" x="458" y="510"/><use href="#d" x="139" y="496"/><use href="#d" x="280" y="507"/><use href="#d" x="299" y="500"/><use href="#d" x="419" y="513"/><use href="#d" x="287" y="503"/><use href="#d" x="654" y="508"/><use href="#d" x="408" y="515"/><use href="#d" x="349" y="510"/><use href="#d" x="573" y="508"/><use href="#d" x="244" y="502"/><use href="#d" x="457" y="511"/><use href="#d" x="661" y="510"/><use href="#d" x="349" y="505"/><use href="#d" x="170" y="496"/><use href="#d" x="333" y="508"/><use href="#d" x="275" y="507"/><use href="#d" x="327" y="504"/><use href="#d" x="342" y="505"/><use href="#d" x="171" y="494"/><use href="#d" x="190" y="498"/><use href="#d" x="560" y="512"/><use href="#d" x="637" y="514"/><use href="#d" x="445" y="512"/><use href="#d" x="232" y="500"/><use href="#d" x="489" y="509"/><use href="#d" x="177" y="495"/><use href="#d" x="219" y="505"/><use href="#d" x="295" y="506"/><use href="#d" x="227" y="495"/><use href="#d" x="552" y="511"/><use href="#d" x="576" y="505"/><use href="#d" x="626" y="510"/><use href="#d" x="254" y="502"/><use href="#d" x="698" y="509"/><use href="#d" x="592" y="509"/><use href="#d" x="553" y="512"/><use href="#d" x="570" y="506"/><use href="#d" x="359" y="507"/><use href="#d" x="551" y="513"/><use href="#d" x="593" y="508"/><use href="#d" x="478" y="510"/><use href="#d" x="158" y="497"/><use href="#d" x="393" y="514"/><use href="#d" x="254" y="504"/><use href="#d" x="162" y="499"/><use href="#d" x="614" y="510"/><use href="#d" x="367" y="509"/><use href="#d" x="261" y="502"/><use href="#d" x="646" y="511"/><use href="#d" x="689" y="506"/><use href="#d" x="517" y="508"/><use href="#d" x="663" y="508"/><use href="#d" x="362" y="508"/><use href="#d" x="559" y="510"/><use href="#d" x="531" y="507"/><use href="#d" x="338" y="504"/><use href="#d" x="249" y="499"/><use href="#d" x="260" y="500"/><use href="#d" x="492" y="511"/><use href="#d" x="328" y="505"/><use href="#d" x="156" y="497"/><use href="#d" x="634" y="508"/><use href="#d" x="486" y="511"/><use href="#d" x="378" y="509"/><use href="#d" x="368" y="511"/><use href="#d" x="258" y="499"/><use href="#d" x="552" y="509"/><use href="#d" x="404" y="514"/><use href="#d" x="492" y="512"/><use href="#d" x="308" y="505"/><use href="#d" x="371" y="517"/><use href="#d" x="331" y="508"/><use href="#d" x="138" y="497"/><use href="#d" x="662" y="507"/><use href="#d" x="253" y="507"/><use href="#d" x="418" y="514"/><use href="#d" x="185" y="501"/><use href="#d" x="609" y="507"/><use href="#d" x="168" y="494"/><use href="#d" x="150" y="498"/><use href="#d" x="540" y="510"/><use href="#d" x="403" y="515"/><use href="#d" x="534" y="510"/><use href="#d" x="196" y="496"/><use href="#d" x="147" y="496"/><use href="#d" x="592" y="511"/><use href="#d" x="567" y="507"/><use href="#d" x="309" y="512"/><use href="#d" x="357" y="507"/><use href="#d" x="174" y="498"/><use href="#d" x="416" y="513"/><use href="#d" x="547" y="510"/><use href="#d" x="325" y="508"/><use href="#d" x="470" y="510"/><use href="#d" x="312" y="507"/><use href="#d" x="363" y="512"/><use href="#d" x="233" y="504"/><use href="#d" x="445" y="510"/><use href="#d" x="307" y="510"/><use href="#d" x="275" y="505"/><use href="#d" x="691" y="509"/><use href="#d" x="686" y="506"/><use href="#d" x="696" y="512"/><use href="#d" x="158" y="498"/><use href="#d" x="413" y="511"/><use href="#d" x="485" y="509"/><use href="#d" x="226" y="504"/><use href="#d" x="577" y="509"/><use href="#d" x="201" y="497"/><use href="#d" x="201" y="506"/><use href="#d" x="187" y="499"/><use href="#d" x="358" y="510"/><use href="#d" x="646" y="510"/><use href="#d" x="287" y="504"/><use href="#d" x="326" y="504"/><use href="#d" x="359" y="510"/><use href="#d" x="184" y="499"/><use href="#d" x="636" y="513"/><use href="#d" x="403" y="514"/><use href="#d" x="164" y="498"/><use href="#d" x="607" y="508"/><use href="#d" x="680" y="506"/><use href="#d" x="178" y="499"/><use href="#d" x="552" y="512"/><use href="#d" x="496" y="510"/><use href="#d" x="400" y="515"/><use href="#d" x="221" y="497"/><use href="#d" x="427" y="512"/><use href="#d" x="702" y="511"/><use href="#d" x="488" y="511"/><use href="#d" x="684" y="512"/><use href="#d" x="710" y="508"/><use href="#d" x="419" y="515"/><use href="#d" x="399" y="513"/><use href="#d" x="591" y="511"/><use href="#d" x="181" y="497"/><use href="#d" x="221" y="498"/><use href="#d" x="492" y="509"/><use href="#d" x="289" y="506"/><use href="#d" x="427" y="511"/><use href="#d" x="272" y="502"/><use href="#d" x="156" y="500"/><use href="#d" x="326" y="505"/><use href="#d" x="627" y="510"/><use href="#d" x="666" y="512"/><use href="#d" x="655" y="512"/><use href="#d" x="629" y="510"/><use href="#d" x="327" y="506"/><use href="#d" x="417" y="509"/><use href="#d" x="184" y="498"/><use href="#d" x="618" y="507"/><use href="#d" x="207" y="502"/><use href="#d" x="513" y="510"/><use href="#d" x="409" y="514"/><use href="#d" x="446" y="512"/><use href="#d" x="633" y="514"/><use href="#d" x="163" y="494"/><use href="#d" x="686" y="508"/><use href="#d" x="329" y="509"/><use href="#d" x="621" y="510"/><use href="#d" x="239" y="502"/><use href="#d" x="547" y="507"/><use href="#d" x="398" y="516"/><use href="#d" x="637" y="510"/><use href="#d" x="159" y="495"/><use href="#d" x="339" y="511"/><use href="#d" x="472" y="510"/><use href="#d" x="569" y="511"/><use href="#d" x="150" y="495"/><use href="#d" x="307" y="502"/><use href="#d" x="560" y="508"/><use href="#d" x="231" y="503"/><use href="#d" x="277" y="504"/><use href="#d" x="202" y="493"/><use href="#d" x="343" y="508"/><use href="#d" x="487" y="510"/><use href="#d" x="521" y="510"/><use href="#d" x="432" y="514"/><use href="#d" x="532" y="508"/><use href="#d" x="514" y="509"/><use href="#d" x="401" y="514"/><use href="#d" x="490" y="509"/><use href="#d" x="540" y="512"/><use href="#d" x="572" y="510"/><use href="#d" x="430" y="512"/><use href="#d" x="303" y="507"/><use href="#d" x="487" y="508"/><use href="#d" x="290" y="508"/><use href="#d" x="260" y="501"/><use href="#d" x="562" y="510"/><use href="#d" x="316" y="506"/><use href="#d" x="616" y="511"/><use href="#d" x="484" y="509"/><use href="#d" x="166" y="497"/><use href="#d" x="514" y="508"/><use href="#d" x="641" y="508"/><use href="#d" x="684" y="507"/><use href="#d" x="408" y="511"/><use href="#d" x="163" y="495"/><use href="#d" x="544" y="514"/><use href="#d" x="634" y="510"/><use href="#d" x="697" y="512"/><use href="#d" x="291" y="506"/><use href="#d" x="424" y="514"/><use href="#d" x="307" y="506"/><use href="#d" x="656" y="512"/><use href="#d" x="424" y="513"/><use href="#d" x="570" y="510"/><use href="#d" x="249" y="498"/><use href="#d" x="558" y="510"/><use href="#d" x="619" y="512"/><use href="#d" x="174" y="496"/><use href="#d" x="575" y="506"/><use href="#d" x="352" y="507"/><use href="#d" x="673" y="501"/><use href="#d" x="697" y="510"/><use href="#d" x="566" y="512"/><use href="#d" x="590" y="513"/><use href="#d" x="421" y="511"/><use href="#d" x="495" y="510"/><use href="#d" x="372" y="511"/><use href="#d" x="598" y="510"/><use href="#d" x="606" y="512"/><use href="#d" x="431" y="512"/><use href="#d" x="599" y="512"/><use href="#d" x="667" y="511"/><use href="#d" x="470" y="513"/><use href="#d" x="520" y="508"/><use href="#d" x="523" y="511"/><use href="#d" x="141" y="499"/><use href="#d" x="711" y="511"/><use href="#d" x="374" y="512"/><use href="#d" x="170" y="498"/><use href="#d" x="422" y="516"/><use href="#d" x="623" y="511"/><use href="#d" x="344" y="506"/><use href="#d" x="477" y="509"/><use href="#d" x="541" y="507"/><use href="#d" x="205" y="501"/><use href="#d" x="222" y="498"/><use href="#d" x="479" y="512"/><use href="#d" x="470" y="507"/><use href="#d" x="285" y="507"/><use href="#d" x="589" y="510"/><use href="#d" x="476" y="511"/><use href="#d" x="585" y="509"/><use href="#d" x="276" y="505"/><use href="#d" x="579" y="512"/><use href="#d" x="463" y="508"/><use href="#d" x="220" y="503"/><use href="#d" x="401" y="513"/><use href="#d" x="209" y="501"/><use href="#d" x="566" y="511"/><use href="#d" x="386" y="514"/><use href="#d" x="609" y="511"/><use href="#d" x="494" y="510"/><use href="#d" x="488" y="510"/><use href="#d" x="186" y="500"/><use href="#d" x="210" y="502"/><use href="#d" x="579" y="510"/><use href="#d" x="239" y="497"/><use href="#d" x="520" y="507"/><use href="#d" x="550" y="510"/><use href="#d" x="558" y="512"/><use href="#d" x="283" y="506"/><use href="#d" x="266" y="509"/><use href="#d" x="155" y="500"/><use href="#d" x="671" y="509"/><use href="#d" x="165" y="500"/><use href="#d" x="578" y="507"/><use href="#d" x="515" y="509"/><use href="#d" x="526" y="508"/><use href="#d" x="449" y="511"/><use href="#d" x="419" y="514"/><use href="#d" x="450" y="510"/><use href="#d" x="627" y="508"/><use href="#d" x="418" y="511"/><use href="#d" x="149" y="494"/><use href="#d" x="628" y="508"/><use href="#d" x="350" y="509"/><use href="#d" x="698" y="513"/><use href="#d" x="296" y="502"/><use href="#d" x="546" y="512"/><use href="#d" x="626" y="514"/><use href="#d" x="387" y="515"/><use href="#d" x="585" y="513"/><use href="#d" x="479" y="510"/><use href="#d" x="154" y="501"/><use href="#d" x="376" y="514"/><use href="#d" x="603" y="511"/><use href="#d" x="149" y="497"/><use href="#d" x="162" y="500"/><use href="#d" x="154" y="495"/><use href="#d" x="637" y="513"/><use href="#d" x="672" y="514"/><use href="#d" x="145" y="502"/><use href="#d" x="402" y="512"/><use href="#d" x="442" y="513"/><use href="#d" x="528" y="507"/><use href="#d" x="399" y="511"/><use href="#d" x="157" y="494"/><use href="#d" x="233" y="501"/><use href="#d" x="619" y="507"/><use href="#d" x="485" y="510"/><use href="#d" x="515" y="513"/><use href="#d" x="284" y="505"/><use href="#d" x="148" y="500"/><use href="#d" x="686" y="513"/><use href="#d" x="639" y="510"/><use href="#d" x="274" y="505"/><use href="#d" x="272" y="506"/><use href="#d" x="617" y="510"/><use href="#d" x="622" y="512"/><use href="#d" x="139" y="497"/><use href="#d" x="405" y="512"/><use href="#d" x="637" y="508"/><use href="#d" x="544" y="512"/><use href="#d" x="201" y="503"/><use href="#d" x="581" y="510"/><use href="#d" x="197" y="499"/><use href="#d" x="172" y="498"/><use href="#d" x="213" y="505"/><use href="#d" x="348" y="509"/><use href="#d" x="413" y="512"/><use href="#d" x="489" y="511"/><use href="#d" x="377" y="515"/><use href="#d" x="453" y="509"/><use href="#d" x="167" y="500"/><use href="#d" x="460" y="510"/><use href="#d" x="703" y="510"/><use href="#d" x="361" y="510"/><use href="#d" x="199" y="496"/><use href="#d" x="294" y="505"/><use href="#d" x="479" y="511"/><use href="#d" x="140" y="498"/><use href="#d" x="431" y="516"/><use href="#d" x="198" y="498"/><use href="#d" x="427" y="513"/><use href="#d" x="169" y="498"/><use href="#d" x="439" y="515"/><use href="#d" x="330" y="504"/><use href="#d" x="408" y="513"/><use href="#d" x="348" y="504"/><use href="#d" x="614" y="513"/><use href="#d" x="597" y="508"/><use href="#d" x="224" y="503"/><use href="#d" x="342" y="508"/><use href="#d" x="707" y="508"/><use href="#d" x="464" y="509"/><use href="#d" x="663" y="509"/><use href="#d" x="535" y="506"/><use href="#d" x="405" y="513"/><use href="#d" x="262" y="505"/><use href="#d" x="293" y="503"/><use href="#d" x="297" y="503"/><use href="#d" x="532" y="507"/><use href="#d" x="140" y="495"/><use href="#d" x="167" y="498"/><use href="#d" x="412" y="513"/><use href="#d" x="512" y="507"/><use href="#d" x="183" y="498"/><use href="#d" x="361" y="513"/><use href="#d" x="438" y="514"/><use href="#d" x="164" y="499"/><use href="#d" x="680" y="512"/><use href="#d" x="289" y="505"/><use href="#d" x="372" y="518"/><use href="#d" x="228" y="508"/><use href="#d" x="655" y="511"/><use href="#d" x="269" y="505"/><use href="#d" x="542" y="509"/><use href="#d" x="578" y="511"/><use href="#d" x="182" y="500"/><use href="#d" x="642" y="507"/><use href="#d" x="430" y="510"/><use href="#d" x="157" y="500"/><use href="#d" x="602" y="508"/><use href="#d" x="682" y="509"/><use href="#d" x="679" y="509"/><use href="#d" x="358" y="509"/><use href="#d" x="491" y="509"/><use href="#d" x="596" y="511"/><use href="#d" x="684" y="514"/><use href="#d" x="169" y="497"/><use href="#d" x="449" y="510"/><use href="#d" x="696" y="508"/><use href="#d" x="452" y="508"/><use href="#d" x="223" y="500"/><use href="#d" x="713" y="511"/><use href="#d" x="219" y="502"/><use href="#d" x="301" y="504"/><use href="#d" x="196" y="501"/><use href="#d" x="284" y="504"/><use href="#d" x="619" y="509"/><use href="#d" x="559" y="506"/><use href="#d" x="249" y="509"/><use href="#d" x="334" y="506"/><use href="#d" x="243" y="505"/><use href="#d" x="705" y="510"/><use href="#d" x="446" y="509"/><use href="#d" x="287" y="501"/><use href="#d" x="144" y="495"/><use href="#d" x="254" y="498"/><use href="#d" x="402" y="513"/><use href="#d" x="690" y="510"/><use href="#d" x="291" y="505"/><use href="#d" x="416" y="516"/><use href="#d" x="143" y="498"/><use href="#d" x="454" y="510"/><use href="#d" x="420" y="512"/><use href="#d" x="604" y="512"/><use href="#d" x="450" y="512"/><use href="#d" x="280" y="506"/><use href="#d" x="181" y="498"/><use href="#d" x="691" y="508"/><use href="#d" x="433" y="512"/><use href="#d" x="208" y="505"/><use href="#d" x="142" y="499"/><use href="#d" x="269" y="497"/><use href="#d" x="557" y="513"/><use href="#d" x="161" y="498"/><use href="#d" x="601" y="509"/><use href="#d" x="278" y="503"/><use href="#d" x="602" y="507"/><use href="#d" x="568" y="510"/><use href="#d" x="659" y="512"/><use href="#d" x="310" y="505"/><use href="#d" x="160" y="497"/><use href="#d" x="258" y="507"/><use href="#d" x="356" y="506"/><use href="#d" x="580" y="508"/><use href="#d" x="225" y="499"/><use href="#d" x="176" y="499"/><use href="#d" x="475" y="512"/><use href="#d" x="330" y="508"/><use href="#d" x="710" y="511"/><use href="#d" x="431" y="511"/><use href="#d" x="217" y="498"/><use href="#d" x="207" y="505"/><use href="#d" x="407" y="514"/><use href="#d" x="288" y="507"/><use href="#d" x="168" y="493"/><use href="#d" x="363" y="510"/><use href="#d" x="465" y="507"/><use href="#d" x="397" y="514"/><use href="#d" x="623" y="508"/><use href="#d" x="239" y="503"/><use href="#d" x="206" y="503"/><use href="#d" x="162" y="496"/><use href="#d" x="398" y="513"/><use href="#d" x="299" y="505"/><use href="#d" x="243" y="506"/><use href="#d" x="638" y="513"/><use href="#d" x="244" y="505"/><use href="#d" x="212" y="496"/><use href="#d" x="455" y="511"/><use href="#d" x="435" y="511"/><use href="#d" x="447" y="508"/><use href="#d" x="685" y="507"/><use href="#d" x="578" y="510"/><use href="#d" x="441" y="513"/><use href="#d" x="349" y="506"/><use href="#d" x="322" y="509"/><use href="#d" x="650" y="510"/><use href="#d" x="312" y="506"/><use href="#d" x="640" y="508"/><use href="#d" x="626" y="509"/><use href="#d" x="698" y="508"/><use href="#d" x="198" y="502"/><use href="#d" x="181" y="501"/><use href="#d" x="707" y="510"/><use href="#d" x="250" y="505"/><use href="#d" x="571" y="510"/><use href="#d" x="268" y="504"/><use href="#d" x="472" y="512"/><use href="#d" x="209" y="503"/><use href="#d" x="264" y="497"/><use href="#d" x="380" y="509"/><use href="#d" x="435" y="512"/><use href="#d" x="469" y="510"/><use href="#d" x="457" y="508"/><use href="#d" x="691" y="513"/><use href="#d" x="630" y="513"/><use href="#d" x="571" y="507"/><use href="#d" x="267" y="503"/><use href="#d" x="325" y="509"/><use href="#d" x="339" y="507"/><use href="#d" x="684" y="504"/><use href="#d" x="202" y="494"/><use href="#d" x="612" y="513"/><use href="#d" x="402" y="514"/><use href="#d" x="554" y="512"/><use href="#d" x="583" y="507"/><use href="#d" x="146" y="498"/><use href="#d" x="579" y="509"/><use href="#d" x="156" y="501"/><use href="#d" x="584" y="510"/><use href="#d" x="668" y="510"/><use href="#d" x="530" y="506"/><use href="#d" x="249" y="497"/><use href="#d" x="257" y="508"/><use href="#d" x="620" y="510"/><use href="#d" x="195" y="499"/><use href="#d" x="218" y="501"/><use href="#d" x="171" y="497"/><use href="#d" x="424" y="512"/><use href="#d" x="518" y="508"/><use href="#d" x="597" y="509"/><use href="#d" x="521" y="511"/><use href="#d" x="179" y="501"/><use href="#d" x="519" y="508"/><use href="#d" x="181" y="503"/><use href="#d" x="337" y="510"/><use href="#d" x="143" y="497"/><use href="#d" x="371" y="510"/><use href="#d" x="655" y="505"/><use href="#d" x="283" y="505"/><use href="#d" x="208" y="500"/><use href="#d" x="343" y="505"/><use href="#d" x="200" y="496"/><use href="#d" x="293" y="511"/><use href="#d" x="212" y="507"/><use href="#d" x="351" y="508"/><use href="#d" x="539" y="510"/><use href="#d" x="393" y="515"/><use href="#d" x="232" y="504"/><use href="#d" x="457" y="510"/><use href="#d" x="390" y="512"/><use href="#d" x="562" y="509"/><use href="#d" x="678" y="501"/><use href="#d" x="392" y="513"/><use href="#d" x="704" y="512"/><use href="#d" x="352" y="509"/><use href="#d" x="232" y="502"/><use href="#d" x="604" y="509"/><use href="#d" x="182" y="495"/><use href="#d" x="561" y="513"/><use href="#d" x="561" y="511"/><use href="#d" x="667" y="506"/><use href="#d" x="642" y="512"/><use href="#d" x="351" y="507"/><use href="#d" x="274" y="508"/><use href="#d" x="302" y="505"/><use href="#d" x="660" y="512"/><use href="#d" x="654" y="509"/><use href="#d" x="370" y="507"/><use href="#d" x="238" y="504"/><use href="#d" x="382" y="513"/><use href="#d" x="611" y="513"/><use href="#d" x="446" y="511"/><use href="#d" x="529" y="509"/><use href="#d" x="446" y="513"/><use href="#d" x="409" y="510"/><use href="#d" x="468" y="509"/><use href="#d" x="684" y="508"/><use href="#d" x="519" y="510"/><use href="#d" x="625" y="514"/><use href="#d" x="550" y="513"/><use href="#d" x="530" y="505"/><use href="#d" x="354" y="505"/><use href="#d" x="288" y="509"/><use href="#d" x="310" y="506"/><use href="#d" x="484" y="508"/><use href="#d" x="436" y="514"/><use href="#d" x="265" y="505"/><use href="#d" x="618" y="508"/><use href="#d" x="221" y="501"/><use href="#d" x="164" y="497"/><use href="#d" x="154" y="500"/><use href="#d" x="258" y="502"/><use href="#d" x="452" y="509"/><use href="#d" x="616" y="513"/><use href="#d" x="260" y="505"/><use href="#d" x="447" y="506"/><use href="#d" x="629" y="511"/><use href="#d" x="615" y="509"/><use href="#d" x="673" y="509"/><use href="#d" x="701" y="510"/><use href="#d" x="631" y="513"/><use href="#d" x="618" y="513"/><use href="#d" x="522" y="512"/><use href="#d" x="393" y="512"/><use href="#d" x="548" y="510"/><use href="#d" x="149" y="495"/><use href="#d" x="253" y="506"/><use href="#d" x="309" y="503"/><use href="#d" x="190" y="501"/><use href="#d" x="656" y="509"/><use href="#d" x="276" y="506"/><use href="#d" x="486" y="508"/><use href="#d" x="485" y="507"/><use href="#d" x="541" y="508"/><use href="#d" x="223" y="496"/><use href="#d" x="560" y="507"/><use href="#d" x="356" y="509"/><use href="#d" x="473" y="509"/><use href="#d" x="473" y="508"/><use href="#d" x="656" y="507"/><use href="#d" x="461" y="510"/><use href="#d" x="649" y="505"/><use href="#d" x="303" y="511"/><use href="#d" x="633" y="507"/><use href="#d" x="275" y="502"/><use href="#d" x="273" y="507"/><use href="#d" x="550" y="511"/><use href="#d" x="335" y="509"/><use href="#d" x="553" y="510"/><use href="#d" x="330" y="509"/><use href="#d" x="397" y="510"/><use href="#d" x="335" y="503"/><use href="#d" x="263" y="498"/><use href="#d" x="363" y="508"/><use href="#d" x="277" y="503"/><use href="#d" x="266" y="500"/><use href="#d" x="572" y="511"/><use href="#d" x="448" y="511"/><use href="#d" x="594" y="514"/><use href="#d" x="606" y="508"/><use href="#d" x="525" y="509"/><use href="#d" x="188" y="500"/><use href="#d" x="405" y="515"/><use href="#d" x="352" y="511"/><use href="#d" x="593" y="510"/><use href="#d" x="555" y="512"/><use href="#d" x="451" y="509"/><use href="#d" x="242" y="507"/><use href="#d" x="695" y="509"/><use href="#d" x="278" y="507"/><use href="#d" x="225" y="504"/><use href="#d" x="170" y="493"/><use href="#d" x="250" y="504"/><use href="#d" x="517" y="511"/><use href="#d" x="598" y="508"/><use href="#d" x="669" y="512"/><use href="#d" x="578" y="509"/><use href="#d" x="667" y="510"/><use href="#d" x="662" y="510"/><use href="#d" x="226" y="501"/><use href="#d" x="277" y="507"/><use href="#d" x="586" y="506"/><use href="#d" x="433" y="516"/><use href="#d" x="708" y="512"/><use href="#d" x="256" y="498"/><use href="#d" x="338" y="507"/><use href="#d" x="682" y="510"/><use href="#d" x="229" y="501"/><use href="#d" x="641" y="513"/><use href="#d" x="619" y="511"/><use href="#d" x="586" y="509"/><use href="#d" x="229" y="500"/><use href="#d" x="414" y="512"/><use href="#d" x="288" y="503"/><use href="#d" x="233" y="503"/><use href="#d" x="455" y="510"/><use href="#d" x="342" y="501"/><use href="#d" x="674" y="509"/><use href="#d" x="236" y="504"/><use href="#d" x="645" y="510"/><use href="#d" x="632" y="510"/><use href="#d" x="473" y="510"/><use href="#d" x="331" y="503"/><use href="#d" x="250" y="503"/><use href="#d" x="182" y="497"/><use href="#d" x="664" y="512"/><use href="#d" x="396" y="518"/><use href="#d" x="294" y="512"/><use href="#d" x="549" y="515"/><use href="#d" x="200" y="501"/><use href="#d" x="296" y="503"/><use href="#d" x="614" y="511"/><use href="#d" x="419" y="516"/><use href="#d" x="153" y="501"/><use href="#d" x="607" y="507"/><use href="#d" x="384" y="515"/><use href="#d" x="455" y="509"/><use href="#d" x="614" y="508"/><use href="#d" x="207" y="501"/><use href="#d" x="270" y="507"/><use href="#d" x="330" y="503"/><use href="#d" x="669" y="510"/><use href="#d" x="250" y="502"/><use href="#d" x="708" y="511"/><use href="#d" x="419" y="512"/><use href="#d" x="213" y="498"/><use href="#d" x="254" y="494"/><use href="#d" x="393" y="516"/><use href="#d" x="241" y="499"/><use href="#d" x="379" y="515"/><use href="#d" x="255" y="507"/><use href="#d" x="271" y="499"/><use href="#d" x="469" y="512"/><use href="#d" x="620" y="511"/><use href="#d" x="574" y="510"/><use href="#d" x="704" y="510"/><use href="#d" x="530" y="508"/><use href="#d" x="412" y="511"/><use href="#d" x="359" y="513"/><use href="#d" x="286" y="506"/><use href="#d" x="328" y="507"/><use href="#d" x="186" y="502"/><use href="#d" x="339" y="509"/><use href="#d" x="151" y="499"/><use href="#d" x="540" y="509"/><use href="#d" x="631" y="508"/><use href="#d" x="391" y="516"/><use href="#d" x="454" y="511"/><use href="#d" x="196" y="500"/><use href="#d" x="163" y="500"/><use href="#d" x="366" y="510"/><use href="#d" x="400" y="513"/><use href="#d" x="489" y="513"/><use href="#d" x="247" y="502"/><use href="#d" x="387" y="512"/><use href="#d" x="284" y="506"/><use href="#d" x="593" y="513"/><use href="#d" x="302" y="508"/><use href="#d" x="217" y="503"/><use href="#d" x="687" y="508"/><use href="#d" x="231" y="502"/><use href="#d" x="652" y="509"/><use href="#d" x="404" y="515"/><use href="#d" x="569" y="510"/><use href="#d" x="664" y="511"/><use href="#d" x="440" y="514"/><use href="#d" x="235" y="507"/><use href="#d" x="252" y="502"/><use href="#d" x="159" y="498"/><use href="#d" x="628" y="514"/><use href="#d" x="675" y="510"/><use href="#d" x="292" y="503"/><use href="#d" x="274" y="504"/><use href="#d" x="281" y="502"/><use href="#d" x="380" y="511"/><use href="#d" x="404" y="513"/><use href="#d" x="274" y="501"/><use href="#d" x="385" y="514"/><use href="#d" x="320" y="510"/><use href="#d" x="559" y="508"/><use href="#d" x="583" y="509"/><use href="#d" x="484" y="510"/><use href="#d" x="190" y="500"/><use href="#d" x="221" y="495"/><use href="#d" x="341" y="501"/><use href="#d" x="237" y="504"/><use href="#d" x="471" y="510"/><use href="#d" x="411" y="512"/><use href="#d" x="673" y="500"/><use href="#d" x="615" y="513"/><use href="#d" x="358" y="503"/><use href="#d" x="587" y="509"/><use href="#d" x="657" y="511"/><use href="#d" x="526" y="507"/><use href="#d" x="684" y="506"/><use href="#d" x="152" y="497"/><use href="#d" x="305" y="502"/><use href="#d" x="661" y="511"/><use href="#d" x="247" y="503"/><use href="#d" x="177" y="499"/><use href="#d" x="153" y="498"/><use href="#d" x="554" y="509"/><use href="#d" x="328" y="510"/><use href="#d" x="436" y="513"/><use href="#d" x="329" y="506"/><use href="#d" x="194" y="502"/><use href="#d" x="695" y="513"/><use href="#d" x="285" y="506"/><use href="#d" x="194" y="493"/><use href="#d" x="610" y="512"/><use href="#d" x="625" y="512"/><use href="#d" x="698" y="510"/><use href="#d" x="582" y="510"/><use href="#d" x="260" y="497"/><use href="#d" x="564" y="507"/><use href="#d" x="389" y="515"/><use href="#d" x="354" y="508"/><use href="#d" x="658" y="510"/><use href="#d" x="207" y="496"/><use href="#d" x="676" y="507"/><use href="#d" x="205" y="498"/><use href="#d" x="151" y="500"/><use href="#d" x="556" y="509"/><use href="#d" x="388" y="515"/><use href="#d" x="271" y="508"/><use href="#d" x="546" y="510"/><use href="#d" x="432" y="511"/><use href="#d" x="415" y="513"/><use href="#d" x="276" y="508"/><use href="#d" x="237" y="501"/><use href="#d" x="497" y="509"/><use href="#d" x="402" y="515"/><use href="#d" x="497" y="510"/><use href="#d" x="624" y="509"/><use href="#d" x="437" y="511"/><use href="#d" x="564" y="509"/><use href="#d" x="144" y="497"/><use href="#d" x="711" y="509"/><use href="#d" x="586" y="510"/><use href="#d" x="203" y="502"/><use href="#d" x="681" y="510"/><use href="#d" x="537" y="508"/><use href="#d" x="344" y="508"/><use href="#d" x="573" y="509"/><use href="#d" x="623" y="514"/><use href="#d" x="228" y="502"/><use href="#d" x="403" y="512"/><use href="#d" x="634" y="511"/><use href="#d" x="679" y="513"/><use href="#d" x="290" y="504"/><use href="#d" x="235" y="499"/><use href="#d" x="154" y="499"/><use href="#d" x="643" y="510"/><use href="#d" x="542" y="505"/><use href="#d" x="627" y="514"/><use href="#d" x="246" y="500"/><use href="#d" x="428" y="515"/><use href="#d" x="187" y="501"/><use href="#d" x="202" y="503"/><use href="#d" x="441" y="514"/><use href="#d" x="534" y="507"/><use href="#d" x="330" y="505"/><use href="#d" x="192" y="501"/><use href="#d" x="617" y="509"/><use href="#d" x="352" y="506"/><use href="#d" x="441" y="512"/><use href="#d" x="465" y="510"/><use href="#d" x="201" y="499"/><use href="#d" x="693" y="509"/><use href="#d" x="193" y="504"/><use href="#d" x="700" y="512"/><use href="#d" x="262" y="503"/><use href="#d" x="588" y="508"/><use href="#d" x="673" y="517"/><use href="#d" x="291" y="503"/><use href="#d" x="683" y="510"/><use href="#d" x="643" y="508"/><use href="#d" x="276" y="502"/><use href="#d" x="674" y="512"/><use href="#d" x="148" y="501"/><use href="#d" x="159" y="499"/><use href="#d" x="167" y="496"/><use href="#d" x="215" y="501"/><use href="#d" x="376" y="511"/><use href="#d" x="272" y="507"/><use href="#d" x="678" y="508"/><use href="#d" x="188" y="496"/><use href="#d" x="540" y="508"/><use href="#d" x="313" y="504"/><use href="#d" x="340" y="504"/><use href="#d" x="690" y="504"/><use href="#d" x="294" y="504"/><use href="#d" x="627" y="513"/><use href="#d" x="419" y="511"/><use href="#d" x="659" y="509"/><use href="#d" x="496" y="512"/><use href="#d" x="388" y="514"/><use href="#d" x="561" y="510"/><use href="#d" x="220" y="492"/><use href="#d" x="243" y="501"/><use href="#d" x="668" y="514"/><use href="#d" x="278" y="509"/><use href="#d" x="300" y="504"/><use href="#d" x="598" y="511"/><use href="#d" x="700" y="511"/><use href="#d" x="675" y="507"/><use href="#d" x="657" y="508"/><use href="#d" x="392" y="514"/><use href="#d" x="713" y="512"/><use href="#d" x="426" y="513"/><use href="#d" x="437" y="514"/><use href="#d" x="706" y="509"/><use href="#d" x="441" y="516"/><use href="#d" x="688" y="515"/><use href="#d" x="261" y="503"/><use href="#d" x="439" y="514"/><use href="#d" x="269" y="501"/><use href="#d" x="679" y="510"/><use href="#d" x="172" y="494"/><use href="#d" x="390" y="513"/><use href="#d" x="620" y="509"/><use href="#d" x="671" y="508"/><use href="#d" x="574" y="509"/><use href="#d" x="695" y="508"/><use href="#d" x="640" y="509"/><use href="#d" x="439" y="512"/><use href="#d" x="712" y="508"/><use href="#d" x="278" y="506"/><use href="#d" x="651" y="509"/><use href="#d" x="385" y="515"/><use href="#d" x="519" y="509"/><use href="#d" x="681" y="506"/><use href="#d" x="709" y="509"/><use href="#d" x="619" y="508"/><use href="#d" x="262" y="504"/><use href="#d" x="386" y="513"/><use href="#d" x="358" y="506"/><use href="#d" x="665" y="511"/><use href="#d" x="151" y="501"/><use href="#d" x="558" y="508"/><use href="#d" x="469" y="509"/><use href="#d" x="282" y="502"/><use href="#d" x="171" y="500"/><use href="#d" x="239" y="501"/><use href="#d" x="697" y="515"/><use href="#d" x="454" y="509"/><use href="#d" x="421" y="515"/><use href="#d" x="381" y="512"/><use href="#d" x="202" y="497"/><use href="#d" x="191" y="496"/><use href="#d" x="528" y="505"/><use href="#d" x="633" y="509"/><use href="#d" x="291" y="501"/><use href="#d" x="420" y="513"/><use href="#d" x="361" y="509"/><use href="#d" x="675" y="512"/><use href="#d" x="580" y="512"/><use href="#d" x="595" y="506"/><use href="#d" x="594" y="507"/><use href="#d" x="636" y="511"/><use href="#d" x="496" y="508"/><use href="#d" x="571" y="511"/><use href="#d" x="201" y="501"/><use href="#d" x="499" y="508"/><use href="#d" x="656" y="506"/><use href="#d" x="360" y="508"/><use href="#d" x="519" y="511"/><use href="#d" x="159" y="500"/><use href="#d" x="221" y="499"/><use href="#d" x="708" y="513"/><use href="#d" x="277" y="500"/><use href="#d" x="150" y="499"/><use href="#d" x="623" y="513"/><use href="#d" x="617" y="507"/><use href="#d" x="267" y="506"/><use href="#d" x="664" y="509"/><use href="#d" x="384" y="511"/><use href="#d" x="432" y="517"/><use href="#d" x="388" y="516"/><use href="#d" x="455" y="507"/><use href="#d" x="235" y="501"/><use href="#d" x="269" y="504"/><use href="#d" x="409" y="513"/><use href="#d" x="538" y="510"/><use href="#d" x="705" y="511"/><use href="#d" x="601" y="511"/><use href="#d" x="399" y="515"/><use href="#d" x="563" y="509"/><use href="#d" x="627" y="511"/><use href="#d" x="696" y="509"/><use href="#d" x="331" y="504"/><use href="#d" x="610" y="509"/><use href="#d" x="569" y="509"/><use href="#d" x="412" y="516"/><use href="#d" x="514" y="511"/><use href="#d" x="170" y="497"/><use href="#d" x="400" y="512"/><use href="#d" x="626" y="507"/><use href="#d" x="196" y="499"/><use href="#d" x="296" y="506"/><use href="#d" x="352" y="510"/><use href="#d" x="213" y="500"/><use href="#d" x="612" y="511"/><use href="#d" x="572" y="508"/><use href="#d" x="359" y="511"/><use href="#d" x="672" y="515"/><use href="#d" x="439" y="513"/><use href="#d" x="207" y="500"/><use href="#d" x="383" y="512"/><use href="#d" x="607" y="511"/><use href="#d" x="147" y="498"/><use href="#d" x="491" y="507"/><use href="#d" x="479" y="509"/><use href="#d" x="325" y="507"/><use href="#d" x="204" y="496"/><use href="#d" x="152" y="498"/><use href="#d" x="267" y="498"/><use href="#d" x="425" y="511"/><use href="#d" x="337" y="511"/><use href="#d" x="327" y="502"/><use href="#d" x="664" y="514"/><use href="#d" x="176" y="497"/><use href="#d" x="446" y="508"/><use href="#d" x="588" y="509"/><use href="#d" x="355" y="507"/><use href="#d" x="273" y="508"/><use href="#d" x="358" y="507"/><use href="#d" x="430" y="515"/><use href="#d" x="358" y="505"/><use href="#d" x="326" y="509"/><use href="#d" x="194" y="512"/><use href="#d" x="224" y="515"/><use href="#d" x="240" y="514"/><use href="#d" x="276" y="514"/><use href="#d" x="323" y="520"/><use href="#d" x="325" y="520"/><use href="#d" x="417" y="522"/><use href="#d" x="427" y="525"/><use href="#d" x="390" y="527"/><use href="#d" x="453" y="526"/><use href="#d" x="482" y="541"/><use href="#d" x="520" y="527"/><use href="#d" x="487" y="501"/><use href="#d" x="480" y="517"/><use href="#d" x="535" y="499"/><use href="#d" x="650" y="503"/><use href="#d" x="666" y="502"/><use href="#d" x="678" y="498"/><use href="#d" x="680" y="491"/><use href="#d" x="687" y="498"/><use href="#d" x="538" y="519"/><use href="#d" x="543" y="521"/><use href="#d" x="558" y="519"/><use href="#d" x="598" y="517"/><use href="#d" x="622" y="521"/><use href="#d" x="630" y="523"/><use href="#d" x="648" y="520"/><use href="#d" x="660" y="522"/>
<rect x="273" y="149" width="6" height="6"/><rect x="387" y="165" width="6" height="6"/><rect x="450" y="181" width="6" height="6"/><rect x="532" y="136" width="6" height="6"/><rect x="647" y="144" width="6" height="6"/><rect x="675" y="178" width="6" height="6"/><rect x="589" y="498" width="6" height="6"/><rect x="677" y="517" width="6" height="6"/><rect x="675" y="525" width="6" height="6"/>
</g>
<g fill="#fff" shape-rendering="crispEdges">
<rect x="74" y="74" width="2" height="532"/><rect x="774" y="74" width="2" height="532"/><rect x="74" y="74" width="702" height="2"/><rect x="74" y="251" width="702" height="2"/><rect x="74" y="427" width="702" height="2"/><rect x="74" y="604" width="702" height="2"/><rect x="94" y="76" width="1" height="4"/><rect x="94" y="246" width="1" height="11"/><rect x="94" y="423" width="1" height="11"/><rect x="94" y="600" width="1" height="4"/><rect x="113" y="76" width="2" height="4"/><rect x="113" y="246" width="2" height="11"/><rect x="113" y="423" width="2" height="11"/><rect x="113" y="600" width="2" height="4"/><rect x="132" y="76" width="2" height="4"/><rect x="132" y="246" width="2" height="11"/><rect x="132" y="423" width="2" height="11"/><rect x="132" y="600" width="2" height="4"/><rect x="152" y="76" width="1" height="4"/><rect x="152" y="246" width="1" height="11"/><rect x="152" y="423" width="1" height="11"/><rect x="152" y="600" width="1" height="4"/><rect x="171" y="76" width="2" height="9"/><rect x="171" y="242" width="2" height="19"/><rect x="171" y="419" width="2" height="19"/><rect x="171" y="595" width="2" height="9"/><rect x="190" y="76" width="2" height="4"/><rect x="190" y="246" width="2" height="11"/><rect x="190" y="423" width="2" height="11"/><rect x="190" y="600" width="2" height="4"/><rect x="210" y="76" width="1" height="4"/><rect x="210" y="246" width="1" height="11"/><rect x="210" y="423" width="1" height="11"/><rect x="210" y="600" width="1" height="4"/><rect x="229" y="76" width="1" height="4"/><rect x="229" y="246" width="1" height="11"/><rect x="229" y="423" width="1" height="11"/><rect x="229" y="600" width="1" height="4"/><rect x="248" y="76" width="2" height="4"/><rect x="248" y="246" width="2" height="11"/><rect x="248" y="423" width="2" height="11"/><rect x="248" y="600" width="2" height="4"/><rect x="268" y="76" width="1" height="9"/><rect x="268" y="242" width="1" height="19"/><rect x="268" y="419" width="1" height="19"/><rect x="268" y="595" width="1" height="9"/><rect x="287" y="76" width="1" height="4"/><rect x="287" y="246" width="1" height="11"/><rect x="287" y="423" width="1" height="11"/><rect x="287" y="600" width="1" height="4"/><rect x="306" y="76" width="2" height="4"/><rect x="306" y="246" width="2" height="11"/><rect x="306" y="423" width="2" height="11"/><rect x="306" y="600" width="2" height="4"/><rect x="325" y="76" width="2" height="4"/><rect x="325" y="246" width="2" height="11"/><rect x="325" y="423" width="2" height="11"/><rect x="325" y="600" width="2" height="4"/><rect x="345" y="76" width="1" height="4"/><rect x="345" y="246" width="1" height="11"/><rect x="345" y="423" width="1" height="11"/><rect x="345" y="600" width="1" height="4"/><rect x="364" y="76" width="2" height="9"/><rect x="364" y="242" width="2" height="19"/><rect x="364" y="419" width="2" height="19"/><rect x="364" y="595" width="2" height="9"/><rect x="383" y="76" width="2" height="4"/><rect x="383" y="246" width="2" height="11"/><rect x="383" y="423" width="2" height="11"/><rect x="383" y="600" width="2" height="4"/><rect x="403" y="76" width="1" height="4"/><rect x="403" y="246" width="1" height="11"/><rect x="403" y="423" width="1" height="11"/><rect x="403" y="600" width="1" height="4"/><rect x="422" y="76" width="1" height="4"/><rect x="422" y="246" width="1" height="11"/><rect x="422" y="423" width="1" height="11"/><rect x="422" y="600" width="1" height="4"/><rect x="441" y="76" width="2" height="4"/><rect x="441" y="246" width="2" height="11"/><rect x="441" y="423" width="2" height="11"/><rect x="441" y="600" width="2" height="4"/><rect x="461" y="76" width="1" height="9"/><rect x="461" y="242" width="1" height="19"/><rect x="461" y="419" width="1" height="19"/><rect x="461" y="595" width="1" height="9"/><rect x="480" y="76" width="1" height="4"/><rect x="480" y="246" width="1" height="11"/><rect x="480" y="423" width="1" height="11"/><rect x="480" y="600" width="1" height="4"/><rect x="499" y="76" width="2" height="4"/><rect x="499" y="246" width="2" height="11"/><rect x="499" y="423" width="2" height="11"/><rect x="499" y="600" width="2" height="4"/><rect x="518" y="76" width="2" height="4"/><rect x="518" y="246" width="2" height="11"/><rect x="518" y="423" width="2" height="11"/><rect x="518" y="600" width="2" height="4"/><rect x="538" y="76" width="1" height="4"/><rect x="538" y="246" width="1" height="11"/><rect x="538" y="423" width="1" height="11"/><rect x="538" y="600" width="1" height="4"/><rect x="557" y="76" width="2" height="9"/><rect x="557" y="242" width="2" height="19"/><rect x="557" y="419" width="2" height="19"/><rect x="557" y="595" width="2" height="9"/><rect x="576" y="76" width="2" height="4"/><rect x="576" y="246" width="2" height="11"/><rect x="576" y="423" width="2" height="11"/><rect x="576" y="600" width="2" height="4"/><rect x="596" y="76" width="1" height="4"/><rect x="596" y="246" width="1" height="11"/><rect x="596" y="423" width="1" height="11"/><rect x="596" y="600" width="1" height="4"/><rect x="615" y="76" width="2" height="4"/><rect x="615" y="246" width="2" height="11"/><rect x="615" y="423" width="2" height="11"/><rect x="615" y="600" width="2" height="4"/><rect x="634" y="76" width="2" height="4"/><rect x="634" y="246" width="2" height="11"/><rect x="634" y="423" width="2" height="11"/><rect x="634" y="600" width="2" height="4"/><rect x="654" y="76" width="1" height="9"/><rect x="654" y="242" width="1" height="19"/><rect x="654" y="419" width="1" height="19"/><rect x="654" y="595" width="1" height="9"/><rect x="673" y="76" width="1" height="4"/><rect x="673" y="246" width="1" height="11"/><rect x="673" y="423" width="1" height="11"/><rect x="673" y="600" width="1" height="4"/><rect x="692" y="76" width="2" height="4"/><rect x="692" y="246" width="2" height="11"/><rect x="692" y="423" width="2" height="11"/><rect x="692" y="600" width="2" height="4"/><rect x="712" y="76" width="1" height="4"/><rect x="712" y="246" width="1" height="11"/><rect x="712" y="423" width="1" height="11"/><rect x="712" y="600" width="1" height="4"/><rect x="731" y="76" width="1" height="4"/><rect x="731" y="246" width="1" height="11"/><rect x="731" y="423" width="1" height="11"/><rect x="731" y="600" width="1" height="4"/><rect x="750" y="76" width="2" height="9"/><rect x="750" y="242" width="2" height="19"/><rect x="750" y="419" width="2" height="19"/><rect x="750" y="595" width="2" height="9"/><rect x="769" y="76" width="2" height="4"/><rect x="769" y="246" width="2" height="11"/><rect x="769" y="423" width="2" height="11"/><rect x="769" y="600" width="2" height="4"/><rect x="76" y="202" width="9" height="1"/><rect x="765" y="202" width="9" height="1"/><rect x="76" y="152" width="9" height="2"/><rect x="765" y="152" width="9" height="2"/><rect x="76" y="103" width="9" height="2"/><rect x="765" y="103" width="9" height="2"/><rect x="76" y="378" width="9" height="2"/><rect x="765" y="378" width="9" height="2"/><rect x="76" y="329" width="9" height="2"/><rect x="765" y="329" width="9" height="2"/><rect x="76" y="279" width="9" height="2"/><rect x="765" y="279" width="9" height="2"/><rect x="76" y="589" width="9" height="2"/><rect x="765" y="589" width="9" height="2"/><rect x="76" y="516" width="9" height="1"/><rect x="765" y="516" width="9" height="1"/><rect x="76" y="442" width="9" height="2"/><rect x="765" y="442" width="9" height="2"/><rect x="76" y="574" width="4" height="2"/><rect x="770" y="574" width="4" height="2"/><rect x="76" y="560" width="4" height="1"/><rect x="770" y="560" width="4" height="1"/><rect x="76" y="545" width="4" height="2"/><rect x="770" y="545" width="4" height="2"/><rect x="76" y="530" width="4" height="2"/><rect x="770" y="530" width="4" height="2"/><rect x="76" y="501" width="4" height="2"/><rect x="770" y="501" width="4" height="2"/><rect x="76" y="486" width="4" height="2"/><rect x="770" y="486" width="4" height="2"/><rect x="76" y="472" width="4" height="1"/><rect x="770" y="472" width="4" height="1"/><rect x="76" y="457" width="4" height="2"/><rect x="770" y="457" width="4" height="2"/>
</g>
<g fill="#f00" shape-rendering="crispEdges"><rect x="93" y="218" width="6" height="2"/><rect x="93" y="230" width="6" height="2"/><rect x="95" y="218" width="2" height="14"/><rect x="93" y="398" width="6" height="2"/><rect x="93" y="403" width="6" height="2"/><rect x="95" y="398" width="2" height="7"/><rect x="93" y="573" width="6" height="2"/><rect x="93" y="581" width="6" height="2"/><rect x="95" y="573" width="2" height="10"/></g>
<g fill="none" stroke-width="1.8" stroke-linecap="round" stroke-linejoin="round" shape-rendering="crispEdges">
<path stroke="#fff" d="M55.45 617.23L56.60 616.65L58.33 614.92L58.33 627.00M72.70 618.95L72.12 620.67L70.97 621.83L69.25 622.40L68.67 622.40L66.95 621.83L65.80 620.67L65.22 618.95L65.22 618.38L65.80 616.65L66.95 615.50L68.67 614.92L69.25 614.92L70.97 615.50L72.12 616.65L72.70 618.95L72.70 621.83L72.12 624.70L70.97 626.42L69.25 627.00L68.10 627.00L66.38 626.42L65.80 625.27M79.60 614.92L77.88 615.50L77.30 616.65L77.30 617.80L77.88 618.95L79.03 619.52L81.33 620.10L83.05 620.67L84.20 621.83L84.78 622.98L84.78 624.70L84.20 625.85L83.62 626.42L81.90 627.00L79.60 627.00L77.88 626.42L77.30 625.85L76.72 624.70L76.72 622.98L77.30 621.83L78.45 620.67L80.17 620.10L82.47 619.52L83.62 618.95L84.20 617.80L84.20 616.65L83.62 615.50L81.90 614.92L79.60 614.92M88.80 617.80L88.80 617.23L89.38 616.08L89.95 615.50L91.10 614.92L93.40 614.92L94.55 615.50L95.12 616.08L95.70 617.23L95.70 618.38L95.12 619.52L93.97 621.25L88.22 627.00L96.28 627.00M151.97 617.23L153.12 616.65L154.84 614.92L154.84 627.00M169.22 618.95L168.64 620.67L167.49 621.83L165.77 622.40L165.19 622.40L163.47 621.83L162.32 620.67L161.74 618.95L161.74 618.38L162.32 616.65L163.47 615.50L165.19 614.92L165.77 614.92L167.49 615.50L168.64 616.65L169.22 618.95L169.22 621.83L168.64 624.70L167.49 626.42L165.77 627.00L164.62 627.00L162.89 626.42L162.32 625.27M176.12 614.92L174.39 615.50L173.82 616.65L173.82 617.80L174.39 618.95L175.54 619.52L177.84 620.10L179.57 620.67L180.72 621.83L181.29 622.98L181.29 624.70L180.72 625.85L180.14 626.42L178.42 627.00L176.12 627.00L174.39 626.42L173.82 625.85L173.24 624.70L173.24 622.98L173.82 621.83L174.97 620.67L176.69 620.10L178.99 619.52L180.14 618.95L180.72 617.80L180.72 616.65L180.14 615.50L178.42 614.92L176.12 614.92M190.49 614.92L184.74 622.98L193.37 622.98M190.49 614.92L190.49 627.00M248.49 617.23L249.64 616.65L251.36 614.92L251.36 627.00M265.74 618.95L265.16 620.67L264.01 621.83L262.29 622.40L261.71 622.40L259.99 621.83L258.84 620.67L258.26 618.95L258.26 618.38L258.84 616.65L259.99 615.50L261.71 614.92L262.29 614.92L264.01 615.50L265.16 616.65L265.74 618.95L265.74 621.83L265.16 624.70L264.01 626.42L262.29 627.00L261.14 627.00L259.41 626.42L258.84 625.27M272.64 614.92L270.91 615.50L270.34 616.65L270.34 617.80L270.91 618.95L272.06 619.52L274.36 620.10L276.09 620.67L277.24 621.83L277.81 622.98L277.81 624.70L277.24 625.85L276.66 626.42L274.94 627.00L272.64 627.00L270.91 626.42L270.34 625.85L269.76 624.70L269.76 622.98L270.34 621.83L271.49 620.67L273.21 620.10L275.51 619.52L276.66 618.95L277.24 617.80L277.24 616.65L276.66 615.50L274.94 614.92L272.64 614.92M288.74 616.65L288.16 615.50L286.44 614.92L285.29 614.92L283.56 615.50L282.41 617.23L281.84 620.10L281.84 622.98L282.41 625.27L283.56 626.42L285.29 627.00L285.86 627.00L287.59 626.42L288.74 625.27L289.31 623.55L289.31 622.98L288.74 621.25L287.59 620.10L285.86 619.52L285.29 619.52L283.56 620.10L282.41 621.25L281.84 622.98M345.01 617.23L346.16 616.65L347.88 614.92L347.88 627.00M362.26 618.95L361.69 620.67L360.54 621.83L358.81 622.40L358.24 622.40L356.51 621.83L355.36 620.67L354.79 618.95L354.79 618.38L355.36 616.65L356.51 615.50L358.24 614.92L358.81 614.92L360.54 615.50L361.69 616.65L362.26 618.95L362.26 621.83L361.69 624.70L360.54 626.42L358.81 627.00L357.66 627.00L355.94 626.42L355.36 625.27M369.16 614.92L367.44 615.50L366.86 616.65L366.86 617.80L367.44 618.95L368.58 619.52L370.88 620.10L372.61 620.67L373.76 621.83L374.33 622.98L374.33 624.70L373.76 625.85L373.19 626.42L371.46 627.00L369.16 627.00L367.44 626.42L366.86 625.85L366.29 624.70L366.29 622.98L366.86 621.83L368.01 620.67L369.74 620.10L372.04 619.52L373.19 618.95L373.76 617.80L373.76 616.65L373.19 615.50L371.46 614.92L369.16 614.92M380.66 614.92L378.94 615.50L378.36 616.65L378.36 617.80L378.94 618.95L380.08 619.52L382.38 620.10L384.11 620.67L385.26 621.83L385.83 622.98L385.83 624.70L385.26 625.85L384.69 626.42L382.96 627.00L380.66 627.00L378.94 626.42L378.36 625.85L377.78 624.70L377.78 622.98L378.36 621.83L379.51 620.67L381.24 620.10L383.53 619.52L384.69 618.95L385.26 617.80L385.26 616.65L384.69 615.50L382.96 614.92L380.66 614.92M441.53 617.23L442.68 616.65L444.40 614.92L444.40 627.00M458.78 618.95L458.20 620.67L457.06 621.83L455.33 622.40L454.75 622.40L453.03 621.83L451.88 620.67L451.31 618.95L451.31 618.38L451.88 616.65L453.03 615.50L454.75 614.92L455.33 614.92L457.06 615.50L458.20 616.65L458.78 618.95L458.78 621.83L458.20 624.70L457.06 626.42L455.33 627.00L454.18 627.00L452.45 626.42L451.88 625.27M470.28 618.95L469.70 620.67L468.56 621.83L466.83 622.40L466.25 622.40L464.53 621.83L463.38 620.67L462.81 618.95L462.81 618.38L463.38 616.65L464.53 615.50L466.25 614.92L466.83 614.92L468.56 615.50L469.70 616.65L470.28 618.95L470.28 621.83L469.70 624.70L468.56 626.42L466.83 627.00L465.68 627.00L463.95 626.42L463.38 625.27M477.75 614.92L476.03 615.50L474.88 617.23L474.30 620.10L474.30 621.83L474.88 624.70L476.03 626.42L477.75 627.00L478.90 627.00L480.63 626.42L481.78 624.70L482.35 621.83L482.35 620.10L481.78 617.23L480.63 615.50L478.90 614.92L477.75 614.92M538.05 617.23L539.20 616.65L540.92 614.92L540.92 627.00M555.30 618.95L554.72 620.67L553.57 621.83L551.85 622.40L551.27 622.40L549.55 621.83L548.40 620.67L547.82 618.95L547.82 618.38L548.40 616.65L549.55 615.50L551.27 614.92L551.85 614.92L553.57 615.50L554.72 616.65L555.30 618.95L555.30 621.83L554.72 624.70L553.57 626.42L551.85 627.00L550.70 627.00L548.97 626.42L548.40 625.27M566.80 618.95L566.22 620.67L565.07 621.83L563.35 622.40L562.77 622.40L561.05 621.83L559.90 620.67L559.32 618.95L559.32 618.38L559.90 616.65L561.05 615.50L562.77 614.92L563.35 614.92L565.07 615.50L566.22 616.65L566.80 618.95L566.80 621.83L566.22 624.70L565.07 626.42L563.35 627.00L562.20 627.00L560.47 626.42L559.90 625.27M571.40 617.80L571.40 617.23L571.97 616.08L572.55 615.50L573.70 614.92L576.00 614.92L577.15 615.50L577.72 616.08L578.30 617.23L578.30 618.38L577.72 619.52L576.57 621.25L570.82 627.00L578.87 627.00M634.57 617.23L635.72 616.65L637.45 614.92L637.45 627.00M651.82 618.95L651.25 620.67L650.10 621.83L648.37 622.40L647.79 622.40L646.07 621.83L644.92 620.67L644.35 618.95L644.35 618.38L644.92 616.65L646.07 615.50L647.79 614.92L648.37 614.92L650.10 615.50L651.25 616.65L651.82 618.95L651.82 621.83L651.25 624.70L650.10 626.42L648.37 627.00L647.22 627.00L645.50 626.42L644.92 625.27M663.32 618.95L662.75 620.67L661.60 621.83L659.87 622.40L659.29 622.40L657.57 621.83L656.42 620.67L655.85 618.95L655.85 618.38L656.42 616.65L657.57 615.50L659.29 614.92L659.87 614.92L661.60 615.50L662.75 616.65L663.32 618.95L663.32 621.83L662.75 624.70L661.60 626.42L659.87 627.00L658.72 627.00L657.00 626.42L656.42 625.27M673.10 614.92L667.35 622.98L675.97 622.98M673.10 614.92L673.10 627.00M731.09 617.23L732.24 616.65L733.97 614.92L733.97 627.00M748.34 618.95L747.76 620.67L746.62 621.83L744.89 622.40L744.31 622.40L742.59 621.83L741.44 620.67L740.87 618.95L740.87 618.38L741.44 616.65L742.59 615.50L744.31 614.92L744.89 614.92L746.62 615.50L747.76 616.65L748.34 618.95L748.34 621.83L747.76 624.70L746.62 626.42L744.89 627.00L743.74 627.00L742.01 626.42L741.44 625.27M759.84 618.95L759.26 620.67L758.12 621.83L756.39 622.40L755.81 622.40L754.09 621.83L752.94 620.67L752.37 618.95L752.37 618.38L752.94 616.65L754.09 615.50L755.81 614.92L756.39 614.92L758.12 615.50L759.26 616.65L759.84 618.95L759.84 621.83L759.26 624.70L758.12 626.42L756.39 627.00L755.24 627.00L753.51 626.42L752.94 625.27M771.34 616.65L770.76 615.50L769.04 614.92L767.89 614.92L766.16 615.50L765.01 617.23L764.44 620.10L764.44 622.98L765.01 625.27L766.16 626.42L767.89 627.00L768.47 627.00L770.19 626.42L771.34 625.27L771.91 623.55L771.91 622.98L771.34 621.25L770.19 620.10L768.47 619.52L767.89 619.52L766.16 620.10L765.01 621.25L764.44 622.98M52.23 204.70L51.65 203.55L49.92 201.82L62.00 201.82M52.80 156.40L52.23 156.40L51.08 155.82L50.50 155.25L49.92 154.10L49.92 151.80L50.50 150.65L51.08 150.07L52.23 149.50L53.38 149.50L54.52 150.07L56.25 151.22L62.00 156.97L62.00 148.92M49.92 106.37L49.92 100.05L54.52 103.50L54.52 101.77L55.10 100.62L55.67 100.05L57.40 99.47L58.55 99.47L60.27 100.05L61.42 101.20L62.00 102.92L62.00 104.65L61.42 106.37L60.85 106.95L59.70 107.52M52.23 380.80L51.65 379.65L49.92 377.93L62.00 377.93M52.80 332.45L52.23 332.45L51.08 331.88L50.50 331.30L49.92 330.15L49.92 327.85L50.50 326.70L51.08 326.12L52.23 325.55L53.38 325.55L54.52 326.12L56.25 327.27L62.00 333.02L62.00 324.98M49.92 282.38L49.92 276.05L54.52 279.50L54.52 277.77L55.10 276.62L55.67 276.05L57.40 275.48L58.55 275.48L60.27 276.05L61.42 277.20L62.00 278.93L62.00 280.65L61.42 282.38L60.85 282.95L59.70 283.52M56.83 600.52L56.83 590.17M52.23 584.42L51.65 583.27L49.92 581.55L62.00 581.55M49.92 516.88L50.50 518.60L52.23 519.75L55.10 520.32L56.83 520.32L59.70 519.75L61.42 518.60L62.00 516.88L62.00 515.72L61.42 514.00L59.70 512.85L56.83 512.27L55.10 512.27L52.23 512.85L50.50 514.00L49.92 515.72L49.92 516.88M52.23 445.30L51.65 444.15L49.92 442.42L62.00 442.42M49.92 252.57L50.50 254.30L52.23 255.45L55.10 256.02L56.83 256.02L59.70 255.45L61.42 254.30L62.00 252.57L62.00 251.43L61.42 249.70L59.70 248.55L56.83 247.97L55.10 247.97L52.23 248.55L50.50 249.70L49.92 251.43L49.92 252.57M49.92 428.57L50.50 430.30L52.23 431.45L55.10 432.02L56.83 432.02L59.70 431.45L61.42 430.30L62.00 428.57L62.00 427.43L61.42 425.70L59.70 424.55L56.83 423.98L55.10 423.98L52.23 424.55L50.50 425.70L49.92 427.43L49.92 428.57"/>
<path stroke="#0ff" d="M380.72 28.23L381.88 27.65L383.60 25.93L383.60 38.00M396.25 25.93L390.50 33.98L399.12 33.98M396.25 25.93L396.25 38.00M405.45 25.93L403.72 26.50L402.57 28.23L402.00 31.10L402.00 32.83L402.57 35.70L403.72 37.42L405.45 38.00L406.60 38.00L408.32 37.42L409.47 35.70L410.05 32.83L410.05 31.10L409.47 28.23L408.32 26.50L406.60 25.93L405.45 25.93M419.25 25.93L413.50 33.98L422.12 33.98M419.25 25.93L419.25 38.00M430.75 27.65L430.75 38.00M425.57 32.83L435.92 32.83M440.52 28.80L440.52 28.23L441.10 27.08L441.67 26.50L442.82 25.93L445.12 25.93L446.27 26.50L446.85 27.08L447.42 28.23L447.42 29.38L446.85 30.52L445.70 32.25L439.95 38.00L448.00 38.00M454.32 25.93L452.60 26.50L452.02 27.65L452.02 28.80L452.60 29.95L453.75 30.52L456.05 31.10L457.77 31.68L458.92 32.83L459.50 33.98L459.50 35.70L458.92 36.85L458.35 37.42L456.62 38.00L454.32 38.00L452.60 37.42L452.02 36.85L451.45 35.70L451.45 33.98L452.02 32.83L453.17 31.68L454.90 31.10L457.20 30.52L458.35 29.95L458.92 28.80L458.92 27.65L458.35 26.50L456.62 25.93L454.32 25.93M470.42 27.65L469.85 26.50L468.12 25.93L466.97 25.93L465.25 26.50L464.10 28.23L463.52 31.10L463.52 33.98L464.10 36.27L465.25 37.42L466.97 38.00L467.55 38.00L469.27 37.42L470.42 36.27L471.00 34.55L471.00 33.98L470.42 32.25L469.27 31.10L467.55 30.52L466.97 30.52L465.25 31.10L464.10 32.25L463.52 33.98M403.72 652.93L408.32 658.20L408.32 664.00M412.92 652.93L408.32 658.20M415.80 652.93L415.80 664.00M415.80 652.93L423.27 652.93M415.80 658.20L420.40 658.20M415.80 664.00L423.27 664.00M429.60 652.93L425.00 664.00M429.60 652.93L434.20 664.00M426.72 660.31L432.47 660.31M437.07 652.93L437.07 664.00M437.07 652.93L442.25 652.93L443.97 653.46L444.55 653.99L445.12 655.04L445.12 656.10L444.55 657.15L443.97 657.68L442.25 658.20L437.07 658.20M441.10 658.20L445.12 664.00M21.93 235.09L22.50 236.81L23.65 237.39L24.80 237.39L25.95 236.81L26.52 235.66L27.10 233.36L27.68 231.64L28.82 230.49L29.98 229.91L31.70 229.91L32.85 230.49L33.42 231.06L34.00 232.79L34.00 235.09L33.42 236.81L32.85 237.39L31.70 237.96L29.98 237.96L28.82 237.39L27.68 236.24L27.10 234.51L26.52 232.21L25.95 231.06L24.80 230.49L23.65 230.49L22.50 231.06L21.93 232.79L21.93 235.09M24.80 208.64L23.65 209.21L22.50 210.36L21.93 211.51L21.93 213.81L22.50 214.96L23.65 216.11L24.80 216.69L26.52 217.26L29.40 217.26L31.12 216.69L32.27 216.11L33.42 214.96L34.00 213.81L34.00 211.51L33.42 210.36L32.27 209.21L31.12 208.64L29.40 208.64M29.40 211.51L29.40 208.64M21.93 204.61L34.00 204.61M21.93 196.56L34.00 196.56M27.68 204.61L27.68 196.56M25.95 186.21L34.00 192.54M25.95 192.54L25.95 186.21M34.00 192.54L34.00 186.21M21.93 172.99L34.00 172.99M21.93 172.99L21.93 165.51M27.68 172.99L27.68 168.39M21.93 162.64L34.00 162.64M34.00 162.64L34.00 155.74M21.93 152.86L30.55 152.86L32.27 152.29L33.42 151.14L34.00 149.41L34.00 148.26L33.42 146.54L32.27 145.39L30.55 144.81L21.93 144.81M21.93 140.79L34.00 132.74M21.93 132.74L34.00 140.79M19.62 115.49L20.77 116.64L22.50 117.79L24.80 118.94L27.68 119.51L29.98 119.51L32.85 118.94L35.15 117.79L36.88 116.64L38.02 115.49M21.93 106.86L31.12 106.86L32.85 107.44L33.42 108.01L34.00 109.16L34.00 110.31L33.42 111.46L32.85 112.04L31.12 112.61L29.98 112.61M25.95 103.41L34.00 99.96M25.95 96.51L34.00 99.96L36.30 101.11L37.45 102.26L38.02 103.41L38.02 103.99M19.62 93.64L20.77 92.49L22.50 91.34L24.80 90.19L27.68 89.61L29.98 89.61L32.85 90.19L35.15 91.34L36.88 92.49L38.02 93.64M24.80 413.89L24.23 413.89L23.08 413.31L22.50 412.74L21.93 411.59L21.93 409.29L22.50 408.14L23.08 407.56L24.23 406.99L25.38 406.99L26.52 407.56L28.25 408.71L34.00 414.46L34.00 406.41M24.80 385.14L23.65 385.71L22.50 386.86L21.93 388.01L21.93 390.31L22.50 391.46L23.65 392.61L24.80 393.19L26.52 393.76L29.40 393.76L31.12 393.19L32.27 392.61L33.42 391.46L34.00 390.31L34.00 388.01L33.42 386.86L32.27 385.71L31.12 385.14L29.40 385.14M29.40 388.01L29.40 385.14M21.93 381.11L34.00 381.11M21.93 373.06L34.00 373.06M27.68 381.11L27.68 373.06M25.95 362.71L34.00 369.04M25.95 369.04L25.95 362.71M34.00 369.04L34.00 362.71M21.93 349.49L34.00 349.49M21.93 349.49L21.93 342.01M27.68 349.49L27.68 344.89M21.93 339.14L34.00 339.14M34.00 339.14L34.00 332.24M21.93 329.36L30.55 329.36L32.27 328.79L33.42 327.64L34.00 325.91L34.00 324.76L33.42 323.04L32.27 321.89L30.55 321.31L21.93 321.31M21.93 317.29L34.00 309.24M21.93 309.24L34.00 317.29M19.62 291.99L20.77 293.14L22.50 294.29L24.80 295.44L27.68 296.01L29.98 296.01L32.85 295.44L35.15 294.29L36.88 293.14L38.02 291.99M21.93 283.36L31.12 283.36L32.85 283.94L33.42 284.51L34.00 285.66L34.00 286.81L33.42 287.96L32.85 288.54L31.12 289.11L29.98 289.11M25.95 279.91L34.00 276.46M25.95 273.01L34.00 276.46L36.30 277.61L37.45 278.76L38.02 279.91L38.02 280.49M19.62 270.14L20.77 268.99L22.50 267.84L24.80 266.69L27.68 266.11L29.98 266.11L32.85 266.69L35.15 267.84L36.88 268.99L38.02 270.14M23.65 580.69L22.50 581.84L21.93 583.56L21.93 585.86L22.50 587.59L23.65 588.74L24.80 588.74L25.95 588.16L26.52 587.59L27.10 586.44L28.25 582.99L28.82 581.84L29.40 581.26L30.55 580.69L32.27 580.69L33.42 581.84L34.00 583.56L34.00 585.86L33.42 587.59L32.27 588.74M21.93 576.66L34.00 576.66M21.93 576.66L21.93 571.49L22.50 569.76L23.08 569.19L24.23 568.61L25.95 568.61L27.10 569.19L27.68 569.76L28.25 571.49L28.25 576.66M21.93 564.59L34.00 564.59M21.93 564.59L21.93 557.11M27.68 564.59L27.68 559.99M34.00 564.59L34.00 557.11M24.80 545.61L23.65 546.19L22.50 547.34L21.93 548.49L21.93 550.79L22.50 551.94L23.65 553.09L24.80 553.66L26.52 554.24L29.40 554.24L31.12 553.66L32.27 553.09L33.42 551.94L34.00 550.79L34.00 548.49L33.42 547.34L32.27 546.19L31.12 545.61M21.93 539.29L34.00 539.29M21.93 543.31L21.93 535.26M21.93 532.39L34.00 532.39M21.93 532.39L21.93 527.21L22.50 525.49L23.08 524.91L24.23 524.34L25.38 524.34L26.52 524.91L27.10 525.49L27.68 527.21L27.68 532.39M27.68 528.36L34.00 524.34M21.93 517.44L34.00 522.04M21.93 517.44L34.00 512.84M29.98 520.31L29.98 514.56M21.93 509.96L34.00 509.96M34.00 509.96L34.00 503.06M21.93 490.99L34.00 490.99M21.93 486.39L34.00 486.39M21.93 486.39L34.00 478.34M21.93 478.34L34.00 478.34M21.93 473.74L34.00 473.74M21.93 473.74L21.93 469.71L22.50 467.99L23.65 466.84L24.80 466.26L26.52 465.69L29.40 465.69L31.12 466.26L32.27 466.84L33.42 467.99L34.00 469.71L34.00 473.74M21.93 461.66L34.00 461.66M21.93 461.66L21.93 454.19M27.68 461.66L27.68 457.06M34.00 461.66L34.00 454.19M21.93 451.31L34.00 443.26M21.93 443.26L34.00 451.31"/>
</g>
</svg>
</body></html>
